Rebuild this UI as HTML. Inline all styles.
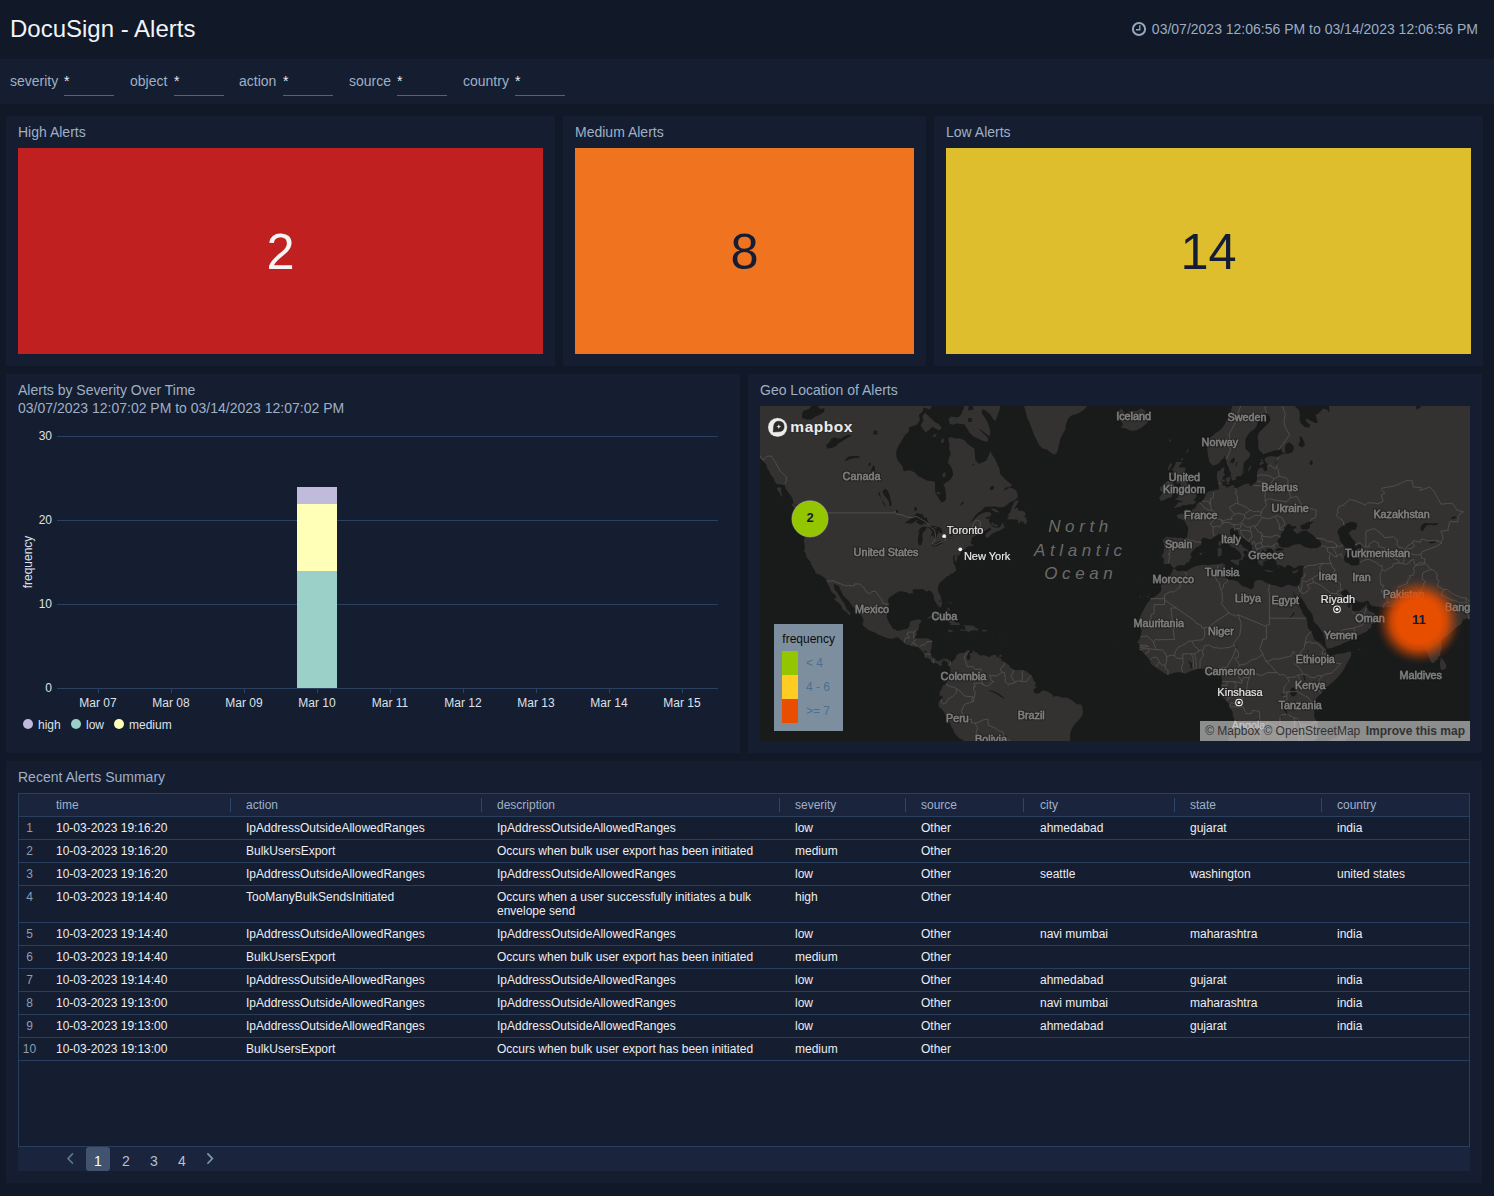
<!DOCTYPE html>
<html lang="en">
<head>
<meta charset="utf-8">
<title>DocuSign - Alerts</title>
<style>
*{box-sizing:border-box;margin:0;padding:0}
html,body{width:1494px;height:1196px;overflow:hidden}
body{background:#111827;font-family:"Liberation Sans",Arial,sans-serif;color:#c5d0de;position:relative}
.abs{position:absolute}
#hdr{left:0;top:0;width:1494px;height:59px;background:#111827}
#title{left:10px;top:14px;font-size:24px;line-height:30px;color:#f2f4f7;white-space:nowrap}
#range{right:16px;top:20px;font-size:14px;line-height:18px;color:#9aadc3;white-space:nowrap}
#fbar{left:0;top:59px;width:1494px;height:45px;background:#151d30}
.flt{position:absolute;top:72px;font-size:14px;line-height:18px;color:#9fb0c6;white-space:nowrap}
.flt i{position:absolute;top:23px;height:1px;width:50px;background:#3b6a94}
.flt b{position:absolute;top:0;font-weight:normal;color:#e8edf3}
.panel{position:absolute;background:#151d30}
.ptitle{position:absolute;left:12px;top:8px;font-size:14px;line-height:17px;color:#9fb0c6;white-space:nowrap}
.big{position:absolute;display:flex;align-items:center;justify-content:center;font-size:50.5px}
#tbl{position:absolute;left:12px;top:32px;width:1452px;height:354px;border:1px solid #2a3f5e;font-size:12px;line-height:14px;color:#eceef2}
.thead{position:absolute;left:0;top:0;width:1450px;height:22px;background:#1a243c;color:#9fb0c6}
.thead .c{top:4px}
.sep{position:absolute;top:4px;width:1px;height:14px;background:#2f4666}
.tr{position:absolute;left:0;width:1450px;border-top:1px solid #2a3f5e}
.c{position:absolute;top:4px;white-space:normal}
.ix{position:absolute;left:-1px;top:4px;width:23px;text-align:center;color:#8d9db3}
#pager{position:absolute;left:12px;top:386px;width:1452px;height:24px;background:#1a243c}
.pg{position:absolute;top:0;width:24px;height:24px;border-radius:3px;text-align:center;font-size:14px;line-height:28px;color:#b3c1d3}
.pg.on{background:#42536f;color:#fff}
</style>
</head>
<body>
<div id="hdr" class="abs"></div>
<div id="title" class="abs">DocuSign - Alerts</div>
<svg class="abs" style="left:1131px;top:21px" width="16" height="16" viewBox="0 0 16 16"><circle cx="8" cy="8" r="6.1" fill="none" stroke="#94a8bf" stroke-width="2"/><path d="M8.8 4.3 V8.7 H4.9" fill="none" stroke="#94a8bf" stroke-width="1.35"/></svg>
<div id="range" class="abs">03/07/2023 12:06:56 PM to 03/14/2023 12:06:56 PM</div>
<div id="fbar" class="abs"></div>
<div class="flt" style="left:10px">severity<b style="left:54px">*</b><i style="left:54px"></i></div>
<div class="flt" style="left:130px">object<b style="left:44px">*</b><i style="left:44px"></i></div>
<div class="flt" style="left:239px">action<b style="left:44px">*</b><i style="left:44px"></i></div>
<div class="flt" style="left:349px">source<b style="left:48px">*</b><i style="left:48px"></i></div>
<div class="flt" style="left:463px">country<b style="left:52px">*</b><i style="left:52px"></i></div>

<div class="panel" style="left:6px;top:116px;width:549px;height:250px">
  <div class="ptitle">High Alerts</div>
  <div class="big" style="left:12px;top:32px;width:525px;height:206px;background:#c02020;color:#f4f4f4">2</div>
</div>
<div class="panel" style="left:563px;top:116px;width:363px;height:250px">
  <div class="ptitle">Medium Alerts</div>
  <div class="big" style="left:12px;top:32px;width:339px;height:206px;background:#f07420;color:#141d33">8</div>
</div>
<div class="panel" style="left:934px;top:116px;width:549px;height:250px">
  <div class="ptitle">Low Alerts</div>
  <div class="big" style="left:12px;top:32px;width:525px;height:206px;background:#dfbe2e;color:#141d33">14</div>
</div>

<div class="panel" id="p-chart" style="left:6px;top:374px;width:734px;height:379px">
  <div class="ptitle">Alerts by Severity Over Time</div>
  <div class="ptitle" style="top:26px">03/07/2023 12:07:02 PM to 03/14/2023 12:07:02 PM</div>
  <svg class="abs" style="left:0;top:0" width="734" height="379" viewBox="6 374 734 379" font-family="Liberation Sans, Arial, sans-serif" font-size="12" fill="#dde2ea">
    <g stroke="#2c4160" stroke-width="1" shape-rendering="crispEdges">
      <line x1="57" x2="718" y1="436.5" y2="436.5"/>
      <line x1="57" x2="718" y1="520.5" y2="520.5"/>
      <line x1="57" x2="718" y1="604.5" y2="604.5"/>
      <line x1="57" x2="718" y1="688.5" y2="688.5"/>
      <line x1="98.5" x2="98.5" y1="688" y2="693"/>
      <line x1="171.5" x2="171.5" y1="688" y2="693"/>
      <line x1="244.5" x2="244.5" y1="688" y2="693"/>
      <line x1="317.5" x2="317.5" y1="688" y2="693"/>
      <line x1="390.5" x2="390.5" y1="688" y2="693"/>
      <line x1="463.5" x2="463.5" y1="688" y2="693"/>
      <line x1="536.5" x2="536.5" y1="688" y2="693"/>
      <line x1="609.5" x2="609.5" y1="688" y2="693"/>
      <line x1="682.5" x2="682.5" y1="688" y2="693"/>
    </g>
    <g text-anchor="end">
      <text x="52" y="440">30</text>
      <text x="52" y="524">20</text>
      <text x="52" y="608">10</text>
      <text x="52" y="692">0</text>
    </g>
    <g text-anchor="middle">
      <text x="98" y="707">Mar 07</text>
      <text x="171" y="707">Mar 08</text>
      <text x="244" y="707">Mar 09</text>
      <text x="317" y="707">Mar 10</text>
      <text x="390" y="707">Mar 11</text>
      <text x="463" y="707">Mar 12</text>
      <text x="536" y="707">Mar 13</text>
      <text x="609" y="707">Mar 14</text>
      <text x="682" y="707">Mar 15</text>
    </g>
    <text transform="translate(32,562) rotate(-90)" text-anchor="middle">frequency</text>
    <g shape-rendering="crispEdges">
      <rect x="297" y="487" width="40" height="17" fill="#c0bbdb"/>
      <rect x="297" y="504" width="40" height="67" fill="#ffffb8"/>
      <rect x="297" y="571" width="40" height="117" fill="#9ad0c7"/>
    </g>
    <circle cx="28" cy="724" r="5" fill="#c0bbdb"/>
    <text x="38" y="729">high</text>
    <circle cx="76" cy="724" r="5" fill="#9ad0c7"/>
    <text x="86" y="729">low</text>
    <circle cx="119" cy="724" r="5" fill="#ffffb8"/>
    <text x="129" y="729">medium</text>
  </svg>
</div>
<div class="panel" id="p-geo" style="left:748px;top:374px;width:734px;height:379px">
  <div class="ptitle">Geo Location of Alerts</div>
<svg class="abs" id="map" style="left:12px;top:32px" width="710" height="335" viewBox="760 406 710 335" font-family="Liberation Sans, Arial, sans-serif">
<rect x="760" y="406" width="710" height="335" fill="#191a1a"/>
<path fill="#343231" d="M749.2,378.7L749.2,454.0L756.6,454.7L760.1,458.3L763.2,461.4L766.0,464.3L767.2,467.9L769.1,471.3L771.0,475.3L773.2,477.5L774.7,481.4L776.6,484.1L780.9,484.6L784.7,485.2L785.9,488.9L788.1,492.0L790.3,495.1L792.2,497.7L793.1,500.7L793.7,503.2L791.5,504.2L793.1,507.1L796.5,509.5L799.0,511.9L801.5,513.8L805.2,516.0L807.4,515.7L807.7,512.9L809.0,513.4L809.9,516.7L810.2,519.9L808.7,521.3L808.0,518.1L806.5,516.9L803.1,515.7L803.4,518.5L804.6,522.2L805.2,525.4L805.4,529.0L804.9,533.4L804.6,537.7L803.7,540.7L804.6,544.5L804.9,548.2L804.0,550.7L805.9,553.9L806.2,556.8L808.4,559.5L809.9,561.1L811.2,562.3L810.2,563.5L811.5,564.5L811.9,565.8L813.3,568.5L814.9,570.4L815.7,573.5L819.3,574.2L821.4,575.7L823.0,576.7L825.5,578.4L826.6,581.0L827.4,583.2L829.2,586.5L830.2,589.0L831.1,591.2L833.6,593.7L835.8,595.8L836.4,597.6L834.5,598.5L833.1,598.1L835.5,600.4L837.6,602.1L839.8,603.9L841.7,606.0L842.3,609.0L844.2,610.4L846.0,611.8L847.9,613.5L849.0,615.2L850.4,614.3L850.4,612.8L848.2,610.8L846.7,609.4L846.0,607.3L844.8,604.6L843.2,602.1L841.7,600.0L840.1,597.6L838.6,594.7L837.0,592.2L834.8,589.7L833.9,586.8L833.9,583.9L836.7,585.0L839.2,586.1L840.1,589.4L841.7,592.6L843.2,595.5L845.7,597.9L847.6,599.7L849.5,601.8L851.0,604.2L852.6,606.6L855.1,609.0L857.6,611.4L859.8,613.8L861.9,616.2L863.2,618.9L863.5,621.6L863.2,622.9L862.2,623.6L863.5,625.9L866.0,627.9L868.8,630.2L871.6,631.5L874.4,632.1L876.9,634.1L880.0,635.2L883.1,636.4L886.2,637.7L889.3,638.5L891.5,639.1L894.0,638.2L896.2,637.3L898.7,638.0L901.2,640.3L903.7,642.5L906.2,644.4L908.7,644.9L911.1,645.6L913.6,646.5L916.1,647.2L918.0,646.8L918.9,648.0L920.5,649.6L922.1,651.2L923.9,653.1L924.4,654.3L924.1,656.2L924.9,657.7L926.4,658.5L927.0,657.2L928.0,658.1L929.8,659.2L931.1,660.7L930.8,662.1L932.3,662.2L933.3,663.3L935.1,662.9L937.0,663.5L938.6,664.6L939.5,665.9L941.1,665.7L942.3,664.8L941.4,662.9L942.6,661.3L943.9,660.3L945.4,660.7L947.0,661.9L947.9,662.9L947.3,664.1L948.5,665.4L949.2,666.0L950.4,667.9L950.1,671.0L950.7,674.2L951.3,676.3L949.8,679.5L947.0,681.0L946.0,682.9L945.1,684.8L942.9,685.5L942.0,687.9L940.7,690.4L939.5,691.6L939.8,694.4L939.3,695.5L941.7,696.6L942.6,696.0L942.6,698.5L941.1,699.4L938.9,701.6L938.3,703.3L938.7,705.7L938.9,707.2L941.7,709.1L943.2,711.0L944.8,713.5L946.3,716.3L947.6,718.9L949.2,721.7L950.7,724.9L951.6,727.1L953.5,730.0L954.1,732.2L956.0,735.1L958.5,737.7L962.5,740.0L966.3,742.3L969.4,744.2L972.5,746.8L972.8,758.8L1070.0,758.8L1069.1,745.5L1069.7,742.3L1070.3,738.4L1070.0,734.2L1071.6,729.4L1073.1,726.8L1075.3,723.6L1078.1,720.8L1080.6,717.9L1082.5,715.1L1082.9,711.9L1082.6,709.1L1081.9,706.0L1080.9,704.6L1077.8,704.3L1075.3,703.2L1072.8,701.0L1070.6,699.4L1067.5,697.7L1064.4,697.4L1061.3,697.5L1058.2,696.3L1055.7,696.0L1053.2,696.9L1052.6,694.7L1050.1,693.2L1047.3,691.6L1043.8,690.5L1041.4,691.0L1040.1,692.9L1038.2,693.5L1034.5,693.2L1033.6,690.4L1034.5,688.5L1037.0,687.6L1034.8,685.7L1035.9,683.2L1034.2,681.3L1032.9,678.2L1032.0,676.0L1030.8,674.8L1028.6,673.2L1026.4,671.3L1023.3,670.2L1020.2,669.8L1017.1,670.2L1013.6,669.8L1012.1,668.5L1009.9,667.0L1009.0,665.1L1005.8,662.9L1003.7,661.6L1001.5,661.3L1001.5,659.1L999.0,657.5L996.5,656.6L995.6,655.3L998.7,654.8L995.3,654.8L991.5,655.3L990.6,656.4L988.4,656.9L985.9,655.8L984.0,655.1L981.2,655.4L979.1,655.3L978.4,653.4L976.3,652.4L974.4,652.3L974.1,650.2L972.5,650.8L972.8,652.6L970.6,653.2L969.1,654.2L970.3,656.2L970.0,658.8L968.5,660.2L967.2,659.1L966.9,656.6L968.2,654.7L967.4,652.7L969.4,651.3L969.1,649.9L967.5,649.9L965.7,651.5L963.5,652.9L960.4,653.1L958.3,653.7L956.3,655.6L955.9,658.1L953.8,660.3L952.0,661.9L952.3,663.7L951.0,662.2L950.4,661.3L948.8,659.7L946.7,658.8L944.2,658.5L942.5,659.2L940.1,660.5L937.9,661.0L936.1,660.3L935.1,659.2L933.6,658.3L932.3,656.9L931.1,655.0L930.6,653.1L930.8,650.8L931.4,648.3L931.7,645.4L932.0,642.8L932.5,641.2L930.5,639.8L928.3,638.5L925.8,638.2L923.3,638.3L920.5,638.6L918.0,638.3L916.1,639.0L914.6,638.3L915.8,636.7L916.8,634.7L916.6,632.5L917.2,630.2L918.2,630.5L918.9,627.2L919.2,624.2L920.8,622.2L921.3,620.6L919.9,619.6L916.8,619.6L913.6,620.2L911.1,620.9L909.7,622.6L909.6,625.2L908.7,627.2L906.8,628.9L904.3,629.3L901.8,630.0L899.3,630.5L897.1,631.0L895.6,629.5L893.4,628.9L891.8,627.2L890.9,625.2L889.3,623.2L888.3,620.9L886.9,617.5L886.9,614.2L887.0,610.8L887.9,607.3L888.9,604.7L888.1,601.1L888.7,598.3L890.9,596.2L893.7,594.7L895.9,593.0L898.7,591.5L901.8,591.3L904.3,592.1L906.2,591.9L907.4,593.1L909.9,593.7L911.8,593.0L913.3,594.0L912.7,591.5L912.7,589.7L914.9,589.0L917.4,589.4L919.9,589.2L922.7,589.0L924.9,590.4L926.7,591.7L928.9,590.3L930.8,591.2L933.0,593.7L933.9,596.2L933.7,598.3L934.8,601.1L936.1,602.8L936.7,604.6L938.3,605.6L938.9,607.5L940.7,607.3L941.7,605.6L942.1,602.5L941.2,599.0L940.6,596.2L939.5,594.0L938.3,591.2L937.8,588.3L938.6,585.0L939.8,582.8L942.3,580.8L944.8,578.4L946.7,576.3L948.7,576.1L950.7,573.9L953.2,573.3L954.8,571.6L956.3,571.0L955.7,568.1L954.8,564.7L953.5,563.5L953.8,560.3L953.2,556.4L954.4,554.8L954.4,559.2L955.1,562.7L956.6,560.3L957.6,558.0L956.3,554.8L958.0,556.6L959.7,554.5L961.0,551.5L960.8,549.7L961.9,549.9L964.7,549.3L967.5,548.0L964.4,547.2L967.5,547.0L969.1,546.2L971.3,545.9L973.5,545.5L973.6,544.1L972.5,545.1L971.3,543.6L970.3,542.6L971.6,541.3L971.3,539.0L972.8,537.1L975.0,536.0L977.2,534.2L979.7,533.8L982.2,532.5L983.0,531.6L985.3,530.5L988.4,528.7L990.3,527.6L990.9,529.4L989.0,530.5L986.5,532.9L985.3,535.1L985.9,537.3L988.4,537.5L990.9,534.7L993.4,532.9L996.8,531.6L999.9,530.5L1001.5,529.6L1004.0,528.1L1005.2,526.3L1003.4,525.4L1003.4,522.2L1001.8,524.0L999.9,527.2L997.4,527.8L994.3,527.4L992.1,526.3L990.3,524.0L989.0,520.8L989.6,518.5L987.2,519.0L985.0,517.4L987.5,517.1L990.6,516.2L991.5,513.6L989.0,511.9L985.3,512.2L981.9,513.6L978.4,515.5L975.3,518.3L972.5,521.3L970.0,523.1L971.9,520.6L973.8,517.8L975.0,515.7L977.8,512.9L980.3,511.5L982.8,509.3L984.7,507.1L988.4,506.6L992.1,506.6L995.9,506.6L999.6,507.4L1003.7,506.9L1007.1,504.7L1010.2,502.0L1013.6,501.0L1016.4,498.7L1018.0,496.7L1017.4,493.1L1015.8,489.9L1013.0,488.4L1009.3,487.3L1012.4,484.9L1009.0,482.5L1005.5,479.7L1003.0,477.0L999.9,473.6L999.6,469.0L997.4,464.3L995.3,459.6L992.1,454.7L990.6,450.9L988.4,455.9L986.5,460.2L982.8,462.6L978.7,463.8L975.3,460.2L975.0,454.7L974.4,448.4L971.0,446.5L967.8,443.9L964.7,440.6L960.4,438.6L955.4,438.6L950.7,436.9L948.2,438.6L949.5,443.9L949.2,448.4L950.7,453.4L948.5,459.6L947.0,462.0L950.1,465.5L952.3,469.6L953.2,474.7L950.7,479.2L947.0,481.9L943.2,484.4L945.1,487.8L945.7,493.1L946.3,498.2L944.8,501.2L941.4,502.2L939.2,499.2L937.6,496.2L935.4,493.1L935.1,487.8L935.1,481.7L931.4,481.1L926.7,480.6L922.1,478.1L918.0,475.9L914.6,472.2L909.6,470.2L903.7,471.3L902.4,466.1L898.1,461.1L896.2,455.9L896.5,450.3L898.7,445.2L901.8,440.6L904.9,435.2L908.7,431.7L909.0,427.5L912.7,426.1L916.8,424.7L919.9,420.3L918.9,415.1L922.7,411.3L923.6,407.4L926.7,408.2L929.8,409.8L931.4,406.6L936.1,402.7L937.6,378.7ZM1234.5,378.7L1233.9,401.9L1232.0,405.9L1231.1,411.3L1229.5,415.9L1226.7,420.3L1224.8,424.0L1222.0,428.3L1218.9,431.1L1215.8,433.1L1211.7,436.5L1208.0,439.2L1207.1,443.2L1207.1,447.1L1207.4,450.9L1208.0,455.9L1208.9,459.6L1209.3,462.0L1212.1,464.9L1213.6,465.5L1216.7,464.6L1219.2,462.9L1221.4,459.9L1223.6,458.3L1224.5,455.3L1225.1,458.0L1226.4,459.6L1226.7,463.8L1228.6,467.3L1229.8,471.3L1231.4,473.6L1230.4,475.3L1231.4,477.2L1232.0,479.5L1231.7,480.3L1233.6,480.4L1236.0,479.5L1235.7,477.5L1237.9,476.1L1240.7,476.4L1242.3,473.6L1243.2,469.0L1243.5,466.1L1243.8,462.6L1245.7,460.8L1248.5,458.3L1250.4,454.7L1249.1,452.2L1245.7,449.0L1245.1,443.2L1245.7,438.6L1247.6,435.2L1250.4,431.7L1254.4,429.0L1257.2,424.7L1257.8,421.1L1258.8,417.4L1261.0,415.1L1263.8,413.6L1266.9,413.6L1269.4,415.9L1270.6,419.6L1268.4,423.2L1265.0,426.5L1261.9,429.7L1258.8,432.8L1257.5,437.2L1258.5,443.2L1258.2,447.1L1259.1,450.3L1261.6,452.2L1263.5,454.4L1266.3,453.1L1269.4,452.2L1272.5,451.2L1275.6,450.3L1278.4,450.0L1280.9,449.0L1282.5,452.2L1285.3,453.7L1282.8,454.0L1280.0,455.3L1278.7,456.5L1275.6,456.8L1272.5,455.9L1268.8,456.5L1265.0,458.0L1264.7,460.5L1266.3,463.2L1267.8,463.5L1267.2,466.7L1267.2,470.2L1265.0,471.6L1263.5,469.3L1261.9,467.0L1258.8,468.7L1256.9,472.5L1256.9,476.4L1257.2,478.6L1255.7,482.5L1253.5,483.8L1251.9,485.7L1249.8,485.7L1248.8,483.6L1245.7,483.8L1242.6,485.2L1239.5,486.8L1236.0,488.4L1234.2,486.8L1233.6,484.9L1230.4,485.7L1228.9,487.0L1225.8,487.8L1226.1,485.7L1223.3,485.7L1222.3,483.6L1221.4,480.8L1222.3,479.2L1223.3,476.4L1225.5,474.7L1223.6,473.0L1224.2,470.2L1224.5,467.0L1222.3,467.9L1220.2,470.5L1218.0,470.8L1217.0,473.6L1216.7,477.0L1217.4,479.7L1218.3,482.5L1218.6,485.7L1219.2,488.4L1218.0,489.9L1216.4,489.4L1213.6,490.5L1211.1,490.7L1208.6,491.5L1206.5,493.3L1205.2,496.7L1204.0,498.4L1202.4,500.7L1200.5,502.0L1198.4,502.9L1196.8,503.7L1196.3,506.6L1194.9,508.3L1192.1,509.8L1191.5,511.2L1188.4,511.0L1187.5,509.5L1185.4,509.5L1186.5,511.9L1186.8,514.5L1184.3,514.5L1181.8,513.6L1179.0,514.3L1176.5,515.5L1177.2,517.6L1178.7,518.5L1180.9,519.0L1183.1,519.9L1184.6,521.1L1185.3,523.1L1186.8,525.2L1187.9,527.2L1188.1,529.0L1187.6,532.9L1187.1,536.0L1186.5,537.9L1184.3,538.6L1181.5,538.1L1178.4,537.9L1175.0,537.5L1171.6,537.4L1168.8,537.1L1166.9,536.4L1164.7,538.3L1162.7,539.4L1162.8,541.1L1163.9,543.2L1164.2,546.2L1164.4,548.2L1163.9,551.1L1163.2,553.9L1162.1,555.2L1161.9,557.2L1163.2,557.8L1163.9,558.8L1163.9,560.7L1163.6,564.1L1166.0,564.1L1168.4,563.7L1170.0,563.7L1171.7,565.8L1172.8,567.4L1174.1,568.1L1175.0,567.4L1177.2,565.8L1179.7,565.2L1182.5,565.2L1184.8,565.2L1186.2,563.1L1189.0,561.9L1189.9,559.2L1192.1,557.4L1190.9,555.6L1190.6,553.9L1191.8,551.9L1194.0,549.5L1195.9,547.8L1198.4,546.6L1201.2,544.7L1201.6,542.8L1201.0,540.7L1201.8,538.8L1204.0,537.7L1206.5,538.3L1208.6,539.0L1210.8,539.6L1212.7,538.3L1214.6,536.6L1217.0,535.5L1218.9,533.8L1221.1,534.9L1223.0,536.0L1223.9,538.1L1224.4,540.3L1226.4,542.4L1228.6,544.1L1230.1,545.7L1232.0,547.2L1234.2,547.4L1235.7,549.0L1236.7,549.9L1238.2,550.7L1239.5,552.3L1240.7,553.9L1241.7,556.4L1240.9,557.8L1240.2,559.9L1241.7,560.5L1243.1,558.6L1243.4,557.0L1245.1,556.0L1244.6,554.3L1243.2,553.3L1244.1,550.7L1245.4,550.5L1247.3,551.3L1247.9,552.5L1248.8,553.1L1249.1,551.5L1247.6,549.7L1245.1,548.2L1242.3,546.6L1242.0,544.5L1239.2,544.5L1237.3,543.2L1235.4,541.5L1233.9,537.7L1231.7,535.8L1229.8,533.8L1230.4,531.4L1229.5,529.8L1231.7,528.5L1234.2,528.1L1233.6,529.2L1234.8,531.8L1236.0,529.8L1237.9,531.2L1238.8,534.7L1241.0,536.8L1243.2,537.9L1245.4,539.8L1247.9,541.3L1249.8,542.6L1251.3,544.1L1252.2,546.6L1251.9,550.3L1253.5,552.7L1254.7,554.8L1256.3,556.6L1257.5,559.0L1259.1,559.5L1261.3,559.2L1263.0,560.5L1260.7,559.7L1258.2,559.7L1257.5,561.1L1258.6,563.1L1259.1,565.0L1260.3,564.3L1261.4,566.4L1262.4,565.0L1263.6,566.4L1263.1,564.3L1262.5,562.3L1264.4,562.7L1263.5,560.7L1265.0,560.7L1266.3,561.7L1266.4,559.5L1264.7,558.4L1262.5,557.2L1262.8,555.2L1264.1,556.0L1263.5,553.9L1261.9,552.3L1262.1,550.3L1263.0,549.9L1264.1,551.3L1265.3,552.5L1265.6,551.1L1266.3,552.5L1266.3,550.9L1267.5,551.7L1265.9,549.9L1267.8,548.6L1270.0,548.4L1272.5,549.0L1273.1,551.1L1273.1,552.1L1272.8,554.3L1275.3,554.3L1274.7,556.4L1273.7,557.8L1273.4,559.2L1275.6,558.8L1275.0,560.3L1276.4,561.1L1276.2,562.9L1277.2,564.3L1276.9,565.4L1279.3,565.0L1281.8,565.6L1283.7,567.4L1285.9,567.0L1287.1,564.9L1289.3,565.2L1291.5,566.4L1293.7,567.9L1296.5,567.4L1298.3,565.8L1300.5,565.4L1302.7,565.8L1304.3,565.4L1303.3,567.8L1303.0,570.4L1303.3,573.5L1302.1,576.1L1301.0,579.1L1300.4,580.6L1299.7,583.2L1298.7,585.2L1296.8,586.5L1294.6,586.5L1292.1,585.9L1290.6,585.0L1288.1,584.8L1285.9,585.4L1284.3,586.5L1281.8,587.4L1279.0,586.7L1276.2,585.6L1272.5,585.0L1270.0,584.6L1268.1,583.4L1265.6,582.6L1263.1,581.0L1260.7,580.0L1257.8,580.0L1255.4,581.0L1254.0,582.8L1254.1,586.1L1253.2,588.3L1251.0,589.4L1248.2,588.3L1245.4,586.7L1242.3,585.9L1239.8,584.1L1238.7,581.9L1236.0,581.0L1232.9,579.9L1229.8,580.0L1227.0,578.9L1225.5,577.2L1223.0,576.1L1224.2,573.9L1225.8,572.0L1225.5,569.7L1224.4,567.0L1225.9,564.5L1223.9,565.0L1223.0,563.5L1221.4,563.1L1218.9,564.5L1215.8,564.5L1213.0,564.5L1210.2,564.9L1207.4,565.2L1204.3,564.7L1200.8,565.0L1197.7,565.8L1194.6,566.4L1191.8,568.1L1189.3,569.3L1187.1,570.8L1185.0,571.6L1182.3,570.8L1179.4,571.2L1176.9,570.8L1175.0,568.7L1173.1,568.9L1172.3,571.6L1170.9,574.2L1169.1,576.5L1166.9,577.6L1164.7,578.7L1162.8,581.3L1161.3,584.3L1161.0,586.8L1161.6,589.0L1160.7,591.2L1159.1,593.3L1156.6,595.5L1153.5,597.4L1151.0,598.1L1149.4,601.1L1147.0,603.5L1145.4,606.3L1143.8,609.4L1142.0,612.5L1140.7,615.5L1138.9,618.5L1138.4,622.1L1140.1,622.9L1140.9,625.5L1140.4,628.2L1141.7,631.1L1140.7,634.7L1140.1,638.0L1138.9,640.6L1137.0,642.2L1138.9,643.8L1139.8,646.0L1139.2,648.9L1140.4,650.5L1142.9,652.1L1144.8,654.3L1146.6,656.6L1148.8,658.8L1150.4,660.7L1150.4,662.6L1151.9,665.1L1154.7,666.6L1156.6,668.0L1158.8,669.5L1161.6,671.3L1164.4,673.2L1167.5,674.9L1170.6,673.8L1173.7,672.9L1177.2,672.3L1180.3,672.3L1182.8,672.7L1185.0,673.7L1187.8,672.4L1190.6,671.3L1193.1,670.6L1195.2,669.5L1198.4,668.8L1201.5,668.5L1204.6,668.7L1206.8,669.9L1208.3,672.3L1209.9,674.8L1212.7,674.9L1215.2,674.5L1217.7,674.2L1219.2,674.3L1221.1,675.9L1221.7,677.9L1222.3,680.1L1221.9,682.6L1221.1,685.1L1220.8,687.3L1219.5,689.4L1218.8,690.7L1220.2,693.2L1221.4,695.7L1223.3,697.9L1225.8,700.3L1227.9,702.5L1229.3,705.0L1229.8,707.4L1231.4,710.0L1232.9,713.2L1232.6,716.0L1233.9,718.2L1234.5,721.7L1234.5,724.6L1233.6,727.8L1231.1,730.3L1229.8,733.5L1229.2,736.4L1228.3,740.0L1228.1,743.2L1228.3,758.8L1302.1,758.8L1306.4,745.2L1310.2,742.9L1313.6,741.3L1315.8,739.7L1318.0,736.7L1318.4,733.8L1317.7,730.0L1317.8,726.2L1317.7,722.3L1316.1,720.4L1314.5,717.6L1314.2,714.4L1314.2,711.3L1313.3,708.8L1312.4,706.9L1313.3,704.1L1314.5,701.9L1316.1,698.8L1317.7,696.6L1320.1,694.4L1322.3,691.6L1324.5,689.1L1327.6,686.3L1330.7,683.8L1333.5,681.6L1336.7,678.5L1339.8,675.1L1342.3,672.0L1344.4,668.5L1346.3,664.8L1348.2,661.3L1350.1,657.8L1351.3,655.3L1351.0,651.5L1348.5,651.8L1345.1,652.9L1341.6,653.5L1337.9,653.7L1334.8,654.8L1331.7,655.8L1328.9,655.4L1326.7,653.1L1325.8,652.1L1326.4,650.5L1326.1,648.9L1324.2,647.3L1322.3,645.1L1319.8,642.7L1317.3,641.2L1315.2,640.4L1313.9,638.3L1313.0,635.4L1311.7,632.5L1309.9,629.8L1308.0,628.2L1307.4,625.2L1307.4,621.9L1306.4,618.5L1304.9,616.2L1302.4,613.5L1302.1,611.1L1300.2,608.0L1298.7,604.9L1297.1,601.4L1295.9,598.3L1294.3,595.8L1293.2,593.0L1292.9,590.6L1294.3,594.0L1296.2,596.9L1298.2,598.5L1299.0,596.2L1299.9,593.7L1300.5,592.2L1300.1,594.7L1299.3,597.2L1301.1,597.6L1302.7,600.0L1304.9,603.5L1306.8,607.0L1308.6,609.7L1310.5,611.8L1312.4,614.8L1313.3,618.2L1313.5,620.9L1315.5,623.6L1317.7,624.9L1319.5,627.9L1321.4,630.8L1323.3,633.8L1324.5,636.4L1324.8,639.3L1325.4,642.2L1326.2,646.4L1327.0,648.6L1329.5,648.6L1331.7,648.3L1334.8,646.7L1337.9,645.7L1341.0,644.4L1344.4,642.7L1347.9,641.2L1351.3,640.3L1354.1,639.1L1354.7,637.0L1357.5,635.6L1360.3,634.7L1363.4,633.1L1366.6,631.8L1368.4,629.5L1371.2,627.5L1371.5,624.2L1373.7,623.2L1375.0,620.2L1377.8,616.7L1376.2,615.9L1374.0,612.8L1371.5,612.0L1368.7,610.8L1367.2,608.2L1367.0,606.0L1367.2,603.4L1366.3,604.2L1365.8,605.6L1363.8,607.2L1361.6,609.4L1359.1,611.1L1356.3,610.9L1353.2,611.4L1351.6,609.7L1352.2,608.0L1352.2,605.6L1351.1,604.0L1349.9,606.0L1349.7,608.7L1348.2,607.3L1347.6,604.9L1347.6,602.5L1345.7,600.4L1343.5,598.3L1342.6,595.8L1341.3,593.3L1340.4,592.4L1341.6,591.9L1343.2,590.6L1344.8,589.4L1346.9,589.9L1348.8,592.2L1350.1,594.6L1351.6,597.7L1354.7,599.2L1357.5,601.6L1360.6,602.5L1363.8,602.3L1366.6,600.7L1368.7,601.3L1369.7,604.2L1371.9,605.8L1375.3,606.6L1379.3,606.8L1383.1,607.5L1386.5,607.3L1389.9,607.0L1393.4,607.2L1396.8,606.5L1399.0,606.8L1400.2,608.7L1401.8,611.6L1404.3,613.0L1406.1,615.0L1408.6,615.7L1410.8,614.8L1409.5,616.5L1406.7,617.0L1408.3,619.6L1410.8,621.9L1413.0,622.6L1415.8,621.2L1416.4,618.9L1417.3,617.2L1417.8,619.6L1418.3,622.2L1418.1,625.2L1418.4,628.2L1418.9,631.1L1419.8,634.7L1420.8,638.0L1422.0,641.2L1423.3,644.4L1424.5,648.0L1426.1,650.8L1427.6,653.4L1428.9,657.2L1430.1,660.7L1431.4,662.4L1433.1,663.2L1434.8,662.1L1435.1,660.7L1437.6,659.6L1438.5,656.2L1440.2,655.9L1440.2,652.4L1441.6,648.6L1441.6,646.0L1441.0,643.2L1441.0,640.3L1443.2,638.6L1444.7,636.9L1447.9,636.0L1448.2,634.4L1451.0,632.5L1453.5,630.3L1456.0,627.5L1458.8,625.5L1461.3,624.1L1462.5,621.6L1462.8,619.7L1465.3,619.1L1466.6,618.2L1468.1,619.6L1470.3,618.9L1472.8,618.2L1474.3,616.5L1476.5,616.5L1481.2,618.2L1481.2,378.7ZM967.2,378.7L963.5,401.1L964.1,407.4L961.6,413.6L959.7,416.6L956.3,417.4L951.0,416.6L948.5,419.6L949.8,424.0L953.2,424.7L956.6,423.2L960.1,424.0L964.1,424.3L967.2,428.6L969.7,433.1L973.1,435.9L976.6,437.9L980.3,439.6L984.0,441.2L987.2,441.9L988.4,438.6L984.7,434.5L980.9,431.1L978.1,428.6L981.9,430.4L985.9,433.8L989.3,436.5L990.6,432.4L989.3,427.5L987.8,422.5L985.0,418.1L981.5,412.8L982.8,409.0L986.8,411.3L990.3,414.4L993.1,418.9L995.3,421.1L997.7,415.1L999.6,409.8L1000.2,406.6L997.7,402.7L993.7,378.7ZM920.5,425.4L923.0,429.0L925.5,432.4L928.6,430.4L932.3,426.8L936.1,429.0L939.5,430.4L941.7,427.5L938.6,424.0L934.5,421.8L930.5,418.1L928.0,415.5L925.2,412.8L922.4,415.9L923.3,421.1ZM933.0,437.2L936.1,436.2L936.4,434.2L933.3,434.5ZM941.4,443.2L944.2,441.9L943.2,437.9L941.1,439.9ZM936.4,493.6L940.4,494.4L939.8,492.3L937.0,492.0ZM942.3,477.0L945.4,477.0L945.4,471.9L942.9,473.6ZM1020.2,378.7L1024.5,402.7L1024.2,406.6L1025.8,412.1L1027.0,417.4L1029.2,421.8L1030.8,426.1L1032.6,431.1L1034.5,435.9L1037.0,440.6L1039.2,445.2L1042.6,448.4L1047.3,449.7L1050.7,452.8L1054.4,454.7L1056.9,452.8L1058.2,448.4L1059.4,443.2L1060.7,437.9L1062.9,433.8L1065.3,429.7L1066.0,424.0L1068.5,418.1L1072.2,415.1L1075.6,414.4L1079.4,412.8L1084.0,409.8L1088.7,404.3L1094.9,378.7ZM1115.5,415.5L1118.0,411.3L1121.4,408.6L1124.8,412.8L1126.1,416.3L1128.3,414.4L1128.6,411.3L1132.3,410.9L1135.1,410.9L1138.5,410.5L1141.0,408.2L1144.8,410.5L1146.0,414.4L1149.1,418.9L1147.6,422.5L1144.8,425.1L1141.0,427.9L1137.0,430.0L1132.9,431.1L1128.6,430.0L1125.2,427.9L1120.9,427.9L1123.0,424.3L1121.1,421.1L1116.7,420.3L1121.7,418.9L1121.1,416.3ZM1169.1,439.9L1170.6,438.9L1170.9,440.9L1169.7,441.9ZM1173.7,507.9L1175.5,508.2L1178.4,506.4L1180.4,506.9L1182.2,504.7L1184.0,505.4L1187.5,504.7L1189.9,504.2L1192.4,504.4L1194.6,503.4L1195.9,502.5L1195.9,501.2L1193.4,501.0L1194.6,499.2L1196.8,495.6L1195.5,493.3L1192.7,493.3L1192.1,491.0L1191.8,489.7L1191.0,487.3L1189.3,484.9L1187.5,484.1L1186.8,481.4L1185.3,478.1L1182.5,477.0L1183.4,475.3L1184.0,473.0L1185.1,470.2L1185.9,468.2L1183.4,467.3L1179.7,467.6L1178.7,466.1L1181.2,463.8L1182.2,461.7L1179.0,462.0L1175.9,462.0L1175.0,464.9L1173.4,467.9L1171.6,469.0L1173.4,471.3L1172.2,473.0L1172.2,475.3L1174.4,476.4L1173.7,480.3L1175.6,479.7L1176.5,477.2L1176.9,480.3L1175.6,483.0L1177.8,483.8L1180.6,482.7L1180.6,485.2L1182.5,487.0L1182.0,490.5L1180.9,491.3L1177.5,491.0L1178.1,493.1L1176.9,494.1L1178.7,495.1L1178.1,497.2L1175.3,498.7L1175.6,500.0L1178.1,499.7L1179.4,500.5L1181.5,501.2L1183.1,500.2L1181.8,502.2L1178.4,502.2L1177.5,503.7L1175.9,505.7ZM1168.4,480.6L1172.5,481.4L1174.1,484.1L1174.4,486.2L1172.2,487.8L1172.5,491.0L1172.8,493.6L1171.6,497.2L1168.4,497.9L1165.6,499.2L1162.8,500.7L1160.7,500.7L1159.7,498.9L1159.1,497.7L1161.0,495.6L1162.2,493.1L1163.5,492.0L1160.0,490.7L1160.3,487.8L1160.3,486.5L1163.8,486.5L1165.6,484.9L1164.4,483.3L1166.0,481.7ZM1167.8,468.4L1170.0,463.8L1172.2,463.2L1170.9,466.7L1168.8,470.8ZM1186.5,454.0L1188.4,450.9L1188.7,448.4L1186.8,450.3ZM1181.2,460.2L1183.4,459.6L1182.8,457.7L1181.2,459.0ZM1006.8,519.4L1009.3,515.7L1007.1,515.0L1009.9,512.9L1010.8,510.5L1012.1,506.6L1013.6,503.2L1015.5,500.7L1018.6,500.2L1018.0,502.7L1014.9,507.6L1014.3,509.5L1016.7,507.6L1018.3,508.8L1018.3,511.0L1021.1,510.5L1024.5,511.5L1025.8,514.3L1023.9,517.6L1026.4,517.1L1025.8,519.4L1027.3,519.7L1026.4,523.8L1024.5,523.8L1023.6,521.3L1022.7,522.9L1021.1,520.4L1019.6,522.7L1017.4,522.7L1018.3,519.9L1015.5,519.4L1012.1,519.4L1009.0,519.2ZM990.6,508.6L994.6,508.8L999.0,511.5L999.0,512.4L995.3,511.9L992.1,510.0ZM990.9,523.8L992.1,522.0L994.6,524.5L998.4,524.7L996.8,526.7L993.7,526.1ZM926.9,618.7L928.9,616.9L932.0,615.0L935.1,614.2L937.9,614.3L940.7,614.7L943.2,615.7L946.0,616.9L949.2,618.4L951.3,619.6L954.1,620.9L956.0,622.4L958.5,622.7L960.5,624.1L959.7,624.7L957.3,625.2L954.1,625.0L951.0,625.2L949.5,625.4L951.0,623.6L949.2,622.6L947.3,621.2L946.0,619.6L943.5,619.2L941.1,618.2L938.6,617.9L936.4,617.0L935.4,615.9L933.0,617.2L931.1,617.5L929.2,618.5ZM932.6,619.1L934.2,618.5L934.5,619.9L933.0,620.1ZM959.6,630.2L960.7,629.3L963.5,629.8L966.0,629.7L964.9,627.9L964.9,626.5L962.9,625.4L965.4,625.2L968.2,625.4L971.0,625.4L973.5,626.0L975.9,627.2L974.7,628.0L977.5,628.4L978.6,629.7L977.5,630.8L975.3,630.2L973.5,630.2L971.6,630.8L970.0,631.0L969.1,632.6L967.8,631.5L965.4,630.8L962.2,630.8ZM947.4,630.7L948.8,629.8L951.6,630.2L953.5,631.0L954.1,631.8L952.3,631.6L950.7,632.3L948.8,631.8ZM982.0,630.3L982.5,629.8L985.9,629.9L987.2,630.5L986.2,631.5L984.0,631.6L982.2,631.6ZM998.7,657.0L999.3,655.0L1001.8,654.5L1001.5,656.7ZM947.6,607.7L949.2,607.7L949.8,610.4L948.8,611.4L947.6,609.7ZM945.4,602.5L948.8,602.1L948.8,602.8L946.0,602.8ZM949.8,601.4L951.6,602.8L951.3,604.6L950.4,603.5ZM999.0,637.0L1000.9,636.7L999.9,638.0ZM1000.9,641.9L1002.0,642.2L1001.8,643.0ZM1230.3,561.1L1231.1,559.9L1233.1,559.5L1235.1,560.1L1238.8,559.3L1240.1,559.3L1238.7,562.3L1239.2,564.1L1238.5,565.6L1236.0,564.3L1233.6,563.1L1232.0,562.3ZM1217.0,548.6L1218.0,548.8L1220.2,547.2L1221.4,548.4L1222.0,550.3L1221.7,552.5L1221.4,555.2L1221.1,556.0L1219.8,555.6L1218.4,556.8L1217.7,556.2L1217.8,552.9L1217.5,550.3ZM1220.8,539.8L1221.1,541.5L1221.2,543.6L1220.5,545.7L1220.0,546.6L1218.9,545.7L1218.4,544.3L1218.3,542.4L1218.9,541.5L1220.5,541.1ZM1264.7,570.8L1265.0,569.7L1266.6,569.9L1268.1,570.4L1270.0,570.6L1271.6,571.2L1273.4,571.2L1273.3,572.0L1271.2,572.0L1268.8,572.2L1266.3,571.2ZM1292.1,571.8L1294.0,571.2L1295.5,570.6L1297.4,570.1L1299.3,569.3L1297.3,571.6L1297.6,572.1L1296.2,572.5L1294.3,573.5L1292.4,572.9ZM1198.8,554.1L1201.2,552.5L1202.2,553.5L1201.0,555.2L1199.8,554.5ZM1203.3,552.1L1204.9,552.5L1204.7,553.1L1203.5,552.7ZM1195.2,556.8L1196.5,556.0L1196.3,557.0ZM1263.1,556.4L1264.4,556.4L1266.9,558.0L1268.0,559.9L1267.2,560.5L1265.9,558.8L1264.4,558.0ZM1277.9,567.4L1279.5,566.4L1279.0,567.9L1277.9,568.5ZM1272.2,555.4L1273.7,554.8L1274.4,556.2L1272.8,556.4ZM1248.0,470.2L1250.1,465.8L1251.3,466.1L1250.2,469.0L1248.5,471.6ZM1242.6,475.6L1244.8,469.3L1244.3,469.6L1242.7,473.6ZM1259.4,463.8L1260.7,462.0L1263.8,461.7L1264.1,462.9L1261.9,464.3L1260.3,465.8ZM1260.3,460.5L1261.9,459.0L1263.3,460.2L1261.9,461.4ZM1225.5,478.6L1227.9,477.2L1229.8,476.4L1230.7,478.6L1229.5,481.4L1227.9,482.7L1226.4,481.4ZM1222.0,479.7L1224.5,479.2L1225.1,481.4L1223.3,482.2L1222.3,481.4ZM1225.8,483.3L1228.6,482.7L1229.8,483.6L1227.6,484.6ZM1237.3,481.1L1238.7,481.4L1238.2,482.5ZM1440.2,658.0L1441.6,657.8L1443.5,660.3L1444.6,661.8L1446.0,664.4L1446.5,666.6L1445.7,668.5L1444.1,669.5L1442.6,670.0L1441.0,669.5L1440.2,667.0L1440.1,664.8L1439.9,662.6L1440.5,660.5L1440.9,659.1ZM1357.5,649.1L1361.3,649.1L1359.7,649.9ZM1345.1,726.2L1346.9,729.4L1348.8,737.1L1347.2,738.7L1346.3,737.4L1346.0,741.6L1345.4,745.5L1343.5,758.8L1329.5,758.8L1328.6,745.5L1329.8,739.7L1333.5,738.7L1336.3,737.4L1338.5,735.1L1340.7,733.2L1341.0,731.0L1343.5,730.3L1343.5,727.4ZM1313.6,706.4L1314.1,706.6L1314.7,708.5L1313.9,708.2ZM1315.0,703.8L1315.6,703.9L1315.5,705.3L1315.0,705.0ZM1326.2,724.3L1327.0,724.9L1326.7,725.8ZM1217.8,676.8L1219.2,677.0L1218.6,678.4ZM1138.9,596.3L1141.2,595.6L1140.1,597.4ZM1142.3,597.6L1143.5,597.0L1143.5,598.3ZM1146.3,597.4L1148.4,595.1L1148.2,596.9ZM1148.4,594.0L1149.6,593.3L1149.4,594.4ZM1137.8,580.2L1139.5,580.4L1138.9,580.9ZM1111.0,560.9L1113.2,561.1L1112.1,561.5ZM1117.5,640.3L1118.5,641.2L1117.7,641.5ZM777.5,487.3L781.3,487.8L780.9,492.0L782.8,496.7L780.6,495.1L778.5,491.5L776.9,488.9Z"/>
<path fill="#191a1a" d="M1292.7,378.7L1293.7,405.1L1296.2,407.4L1299.3,410.5L1299.9,415.1L1299.6,420.3L1301.5,424.0L1305.2,427.2L1309.2,427.5L1310.2,424.7L1307.7,423.2L1305.8,420.3L1306.8,418.5L1310.8,421.1L1315.2,422.9L1317.7,422.9L1317.0,418.9L1315.5,415.5L1320.1,412.1L1323.3,408.6L1327.3,409.8L1329.2,408.2L1328.6,402.7L1330.1,378.7ZM1326.1,408.2L1329.5,412.5L1329.2,408.2ZM1414.2,378.7L1415.2,404.3L1416.7,409.8L1420.5,407.4L1422.9,402.7L1422.0,378.7ZM1355.0,378.7L1358.2,394.5L1362.8,392.8L1370.6,391.1L1376.8,391.9L1380.0,378.7ZM1282.0,547.4L1279.3,545.7L1278.4,543.6L1277.2,542.0L1278.4,539.0L1280.6,537.7L1280.7,534.7L1282.1,532.1L1284.0,530.3L1285.0,527.6L1287.3,524.5L1289.9,523.8L1291.2,524.7L1290.2,525.8L1293.7,526.3L1296.2,526.3L1296.2,527.4L1292.7,529.6L1294.3,531.2L1295.9,532.9L1296.6,533.8L1298.3,533.4L1300.5,532.1L1302.1,530.7L1304.9,531.0L1305.8,530.3L1307.7,531.6L1309.2,532.7L1311.4,534.0L1313.3,535.3L1315.2,537.5L1317.0,539.2L1319.2,540.1L1321.1,542.8L1321.1,545.7L1319.2,546.8L1316.7,548.2L1313.9,548.0L1311.1,548.6L1307.7,547.8L1304.9,547.0L1302.1,545.5L1300.8,543.9L1297.4,544.3L1294.3,544.5L1291.2,545.7L1288.7,547.6L1285.6,547.6ZM1305.2,529.6L1301.8,529.6L1300.2,526.1L1302.1,524.7L1305.8,523.3L1308.6,521.7L1311.4,521.5L1313.9,521.5L1311.1,523.8L1309.6,524.9L1310.2,526.7L1308.3,529.0L1306.4,529.8ZM1275.0,550.3L1277.2,548.4L1279.7,548.0L1281.8,548.4L1284.6,549.3L1281.8,550.5L1278.7,550.9L1276.5,550.7ZM1339.8,528.1L1342.0,526.3L1344.8,524.5L1348.2,522.7L1351.3,521.7L1354.4,522.2L1356.9,523.6L1357.2,525.8L1356.0,529.0L1356.9,530.3L1355.3,529.6L1352.2,529.8L1350.4,531.6L1348.2,532.9L1350.1,534.7L1351.0,537.1L1353.2,539.8L1355.3,541.5L1355.0,545.3L1356.3,547.0L1358.5,544.1L1361.3,545.3L1361.0,547.8L1357.5,548.6L1356.3,549.9L1356.6,552.3L1357.8,554.3L1359.1,556.8L1359.4,560.7L1359.7,564.3L1357.5,564.9L1354.7,565.4L1351.3,565.6L1348.2,563.1L1345.4,562.3L1343.8,559.5L1343.8,556.8L1345.4,554.8L1345.7,551.5L1348.5,550.9L1346.0,549.5L1344.4,546.6L1342.3,544.1L1339.8,540.3L1339.5,536.8L1337.9,533.8L1337.3,531.6L1338.5,529.4ZM1285.3,453.4L1288.4,453.7L1292.4,451.9L1294.0,448.4L1293.0,445.2L1289.0,442.2L1285.9,443.9L1285.0,447.7ZM1298.3,445.5L1302.4,447.4L1304.9,445.2L1303.3,439.9L1300.8,435.9L1299.3,437.2L1300.2,440.6ZM1309.2,463.8L1311.7,465.2L1313.0,462.0L1310.8,459.9ZM1275.6,464.3L1277.5,465.5L1278.4,460.8L1277.5,459.6L1275.6,460.8ZM1230.1,462.6L1232.9,463.2L1235.1,459.9L1233.9,457.4L1231.7,459.0ZM1235.4,466.7L1236.7,465.5L1237.9,462.0L1236.7,462.3ZM1420.1,529.4L1422.6,531.2L1426.4,525.4L1430.1,524.7L1434.5,525.4L1438.2,524.0L1437.6,522.9L1432.9,523.6L1428.2,522.9L1424.5,523.1L1421.4,525.4ZM1428.6,542.8L1431.4,543.6L1435.4,542.8L1436.0,540.9L1432.3,541.1L1429.5,541.7ZM1450.7,518.5L1453.8,519.0L1456.6,517.6L1455.0,516.2L1451.9,516.9ZM1293.8,611.8L1294.5,613.8L1293.0,615.5L1291.2,616.9L1289.3,617.9L1289.6,616.9L1291.2,615.9L1292.4,614.5L1293.4,612.8ZM1290.2,691.6L1290.9,688.5L1293.7,687.6L1296.8,687.6L1298.0,689.4L1297.4,691.6L1295.9,694.7L1294.3,696.3L1291.8,696.3L1290.2,694.1ZM1282.8,699.1L1284.0,702.5L1283.7,706.6L1286.5,711.0L1288.4,715.4L1286.8,714.8L1284.0,709.7L1282.1,705.7L1282.1,701.6ZM1297.1,718.5L1299.0,721.4L1299.3,726.2L1300.8,731.3L1300.8,733.5L1299.3,733.2L1298.3,728.7L1297.7,723.6ZM1303.3,674.5L1304.3,675.1L1305.5,679.8L1304.3,680.7L1303.6,677.6ZM1286.2,685.1L1287.8,683.5L1289.3,681.6L1288.1,682.6L1286.8,683.8ZM1281.8,693.8L1282.8,694.1L1282.5,696.0L1281.5,695.7ZM1280.3,715.4L1282.1,715.7L1281.5,717.9L1280.0,717.3ZM1191.2,668.5L1192.4,667.9L1191.5,665.7L1192.4,663.8L1190.3,662.2L1188.4,660.7L1188.7,662.6L1190.6,664.4L1189.9,666.6ZM1235.1,648.0L1237.3,647.6L1237.0,646.0L1235.1,646.7ZM1307.1,651.8L1308.3,651.8L1308.3,650.2L1307.1,650.2ZM1275.6,744.5L1281.2,741.0L1281.5,741.9L1276.9,745.2ZM904.6,523.6L908.0,522.9L909.9,524.0L913.3,522.7L916.1,520.6L918.0,520.1L916.4,522.4L919.2,524.3L921.7,524.7L923.9,523.6L926.9,523.3L928.3,524.5L928.3,522.2L927.2,519.9L927.0,517.8L924.2,517.8L922.4,514.3L919.9,513.8L916.8,513.1L914.6,515.3L913.0,517.4L910.2,519.0L907.4,521.1ZM918.6,544.7L919.9,545.5L921.4,544.7L922.5,541.5L922.7,538.6L922.1,535.5L923.0,532.5L924.9,530.7L926.4,528.5L927.5,527.6L925.2,526.5L922.7,527.0L920.5,527.8L918.6,530.7L917.4,532.9L918.9,531.8L920.2,530.1L918.9,533.8L918.3,536.4L917.7,539.6L918.0,542.4ZM927.5,527.4L929.2,528.3L931.7,530.7L932.0,533.8L930.2,536.8L931.7,535.8L933.3,535.3L934.5,537.7L934.7,539.6L936.8,537.7L937.0,535.1L938.3,532.9L937.3,530.3L939.2,532.3L941.7,533.4L942.6,532.1L941.7,529.4L939.8,527.2L937.3,526.7L934.2,526.1L931.4,525.8L929.5,525.4L930.2,527.0ZM931.6,545.3L933.9,546.4L937.0,546.2L939.8,544.5L942.3,543.2L945.7,540.7L943.9,540.4L941.4,541.5L938.6,541.3L936.1,543.0L934.2,544.1L932.6,543.6ZM942.9,538.6L944.2,537.1L946.7,536.0L950.1,535.8L953.2,534.7L954.1,536.8L952.3,538.3L949.5,538.6L946.7,538.3L944.8,539.0ZM933.3,542.6L934.5,542.8L934.2,541.5ZM889.5,505.9L891.4,505.9L891.7,503.2L890.6,500.2L890.3,498.2L889.0,493.6L886.9,489.4L885.0,488.4L882.5,491.5L883.7,494.6L885.9,497.2L887.8,499.7L889.0,502.2L889.3,504.7ZM885.9,507.1L884.7,503.7L882.5,500.7L881.2,498.7L882.2,501.2L884.0,505.2ZM880.9,498.7L879.7,496.7L878.1,493.1L879.4,492.0L880.3,495.1ZM845.1,461.4L848.8,459.6L853.5,458.3L859.8,457.4L859.4,456.2L853.5,455.9L848.8,456.5L845.7,459.0ZM871.9,474.7L874.4,473.0L875.0,467.9L873.8,464.9L871.9,467.9L871.0,471.9ZM868.5,466.1L870.7,465.5L870.7,462.6L868.8,463.2ZM827.0,448.4L831.7,448.1L835.5,446.5L838.9,443.2L843.2,440.6L848.2,437.2L851.3,435.9L850.1,434.5L845.1,435.9L840.8,438.6L837.0,438.6L834.8,437.2L831.4,438.6L829.2,442.5L826.1,445.2ZM802.1,418.1L806.8,419.6L811.5,419.6L815.2,416.6L819.3,415.1L823.9,412.1L824.6,408.2L819.9,409.0L817.1,405.1L813.0,404.3L809.0,409.0L803.7,410.5L802.1,413.6ZM873.1,434.5L876.9,434.5L877.5,431.1L874.1,430.4ZM967.8,410.5L973.5,409.8L972.5,405.1L968.8,405.9ZM967.8,421.8L971.9,421.8L971.6,418.1L968.5,418.1ZM914.3,511.0L916.8,510.5L917.1,507.6L914.6,507.1ZM895.0,512.9L897.8,512.9L898.1,510.0L895.6,510.0ZM960.1,506.1L963.2,503.7L964.1,501.2L961.6,502.7ZM938.9,602.1L940.4,602.1L940.4,600.6L939.2,600.6ZM923.9,651.2L926.7,654.0L927.3,653.4L925.5,650.5ZM989.6,489.9L993.4,489.9L994.0,485.7L990.6,486.2ZM1003.7,490.5L1008.3,488.4L1009.9,486.8L1005.2,487.8ZM971.9,466.1L974.7,464.3L972.8,463.8ZM946.7,461.4L949.2,462.0L948.5,460.2ZM803.1,515.5L807.4,516.7L809.6,516.2L807.1,515.5ZM801.2,508.1L805.2,511.5L807.7,512.9L807.4,515.3L805.6,513.4L802.1,509.5ZM793.1,503.7L797.5,505.9L800.9,507.6L797.1,504.9ZM954.8,564.5L953.5,561.9L953.2,558.4L953.5,555.6L954.4,554.8L954.1,558.8L954.8,561.9ZM957.9,557.0L956.6,555.2L956.2,553.9L957.3,555.6ZM983.1,532.1L986.5,530.3L990.0,528.5L991.2,529.8L986.8,532.5L985.0,534.2ZM968.5,654.3L970.0,655.9L970.3,658.1L968.8,660.0L967.2,658.8L966.9,656.2ZM989.0,689.9L993.7,691.3L998.4,693.2L1001.5,695.7L1004.6,697.9L1004.6,698.8L1000.9,696.9L997.7,694.4L993.4,692.6L989.0,690.8Z"/>
<path fill="#343231" d="M933.0,527.2L936.4,527.0L937.0,528.5L934.2,528.3ZM913.6,518.1L916.1,516.9L915.8,517.4Z"/>
<path fill="none" stroke="#5b5957" stroke-width="0.7" stroke-linejoin="round" d="M807.4,512.9L895.1,512.9L895.1,511.0L896.8,514.3L901.8,514.8L906.5,517.1L912.4,517.6L916.1,516.2L927.0,522.7L928.3,524.7L929.5,525.8L931.1,527.6L934.5,529.8L935.8,537.3L934.7,539.8L934.5,541.5L932.6,542.8L932.6,544.1L934.8,545.3L938.6,543.2L945.4,540.7L945.3,538.8L944.8,537.9L948.5,537.1L952.3,537.1L953.8,534.7L956.9,531.8L958.8,531.2L968.8,531.2L971.0,529.4L972.5,527.2L973.5,523.6L975.9,520.1L978.7,520.6L980.3,521.7L980.3,528.1L981.5,529.8L982.8,531.6M752.3,378.7L752.3,451.5L757.9,452.8L763.2,460.2L766.3,456.5L771.0,455.9L775.6,462.6L780.3,471.3L786.5,477.0L786.2,481.4L784.7,484.1M826.7,581.3L834.2,580.6L833.9,581.3L845.7,585.7L854.5,585.7L854.5,583.9L859.8,584.1L864.4,588.1L866.3,591.9L870.0,594.0L871.6,591.5L875.6,591.2L879.1,596.5L881.6,599.3L882.8,603.2L888.7,604.7M904.3,642.7L904.3,640.9L905.9,637.8L909.6,637.8L906.8,633.9L908.0,633.9L908.0,632.1L913.8,632.1L913.6,638.3L914.6,638.3M913.8,632.1L916.4,629.8M916.8,639.0L913.6,641.5L913.2,643.2L910.8,645.2M913.2,643.2L915.8,644.6L918.0,646.4M919.6,647.6L921.4,645.1L924.5,644.8L927.0,641.9L932.3,641.2M924.5,653.7L927.7,654.0L930.8,654.7M933.3,663.3L933.3,660.0L934.4,658.6M948.8,665.9L950.7,663.8L950.6,661.4M969.4,651.3L966.3,653.7L964.1,658.1L966.0,662.2L967.2,666.6L973.1,666.6L975.3,669.5L981.2,669.1L980.3,674.5L981.9,677.9L980.0,679.8L982.2,682.3L983.1,684.8M983.1,684.8L982.5,683.2L974.1,683.2L974.1,685.1L975.9,686.6L973.5,686.8L973.3,689.1L975.3,691.9L973.6,701.6M973.6,701.6L971.3,700.3L973.3,696.9L964.4,696.0L961.9,692.6L956.9,688.8M956.9,688.8L953.8,687.3L950.1,686.5L946.0,684.1M956.9,688.8L956.0,693.2L952.6,696.6L947.9,699.1L946.3,702.8L943.9,704.1L941.4,702.2L941.4,699.1M973.6,701.6L964.4,704.4L961.3,711.3L964.4,717.0L966.6,719.8L971.6,719.2L971.6,723.0L974.7,722.8M974.7,722.8L977.5,727.8L976.6,731.3L975.5,735.1L976.6,739.7L974.7,743.2L975.0,743.9M974.7,722.8L977.2,723.0L984.0,719.5L988.1,719.2L988.1,725.2L995.3,728.1L999.0,731.0L1003.0,731.9L1004.0,740.0L1009.6,740.0L1009.9,743.2L1011.8,745.5M983.1,684.8L987.5,686.3L992.1,682.4L994.0,681.6L991.5,680.7L989.6,675.1L996.2,676.0L1002.4,672.3M1002.4,672.3L1000.2,669.9L1001.2,667.6L1003.7,666.3L1004.6,663.2L1005.1,662.4M1002.4,672.3L1004.9,672.9L1004.6,674.5L1005.5,677.6L1004.9,681.0L1007.7,684.4L1010.8,683.8L1015.5,682.4M1013.3,669.9L1013.0,672.9L1010.8,676.0L1013.3,679.8L1015.5,682.4M1015.5,682.4L1017.4,680.7L1021.4,681.3M1023.3,670.4L1022.0,672.9L1022.7,677.6L1021.4,681.3M1021.4,681.3L1026.4,681.6L1029.5,677.6L1030.6,675.4M1163.9,544.7L1166.1,543.9L1170.9,544.3L1172.2,545.9L1170.0,548.2L1170.0,551.5L1169.7,553.7L1168.1,553.9L1169.7,556.4L1168.8,558.8L1169.7,559.5L1168.1,562.1L1168.4,563.5M1185.9,538.3L1189.3,540.3L1193.7,540.9L1196.8,542.0L1201.3,542.2M1214.9,536.4L1213.3,534.2L1213.0,530.7L1213.3,527.2L1210.8,525.4L1210.5,524.0L1213.3,520.4L1215.2,519.4M1213.3,527.2L1218.0,525.8L1219.5,527.4L1221.1,524.9L1224.1,522.7M1215.2,519.4L1218.3,519.0L1221.4,519.9L1221.4,522.0L1224.1,522.7L1229.5,522.2L1230.1,523.6L1234.2,524.5L1233.9,527.6L1234.5,528.5M1215.2,519.4L1215.2,517.1L1217.0,512.9L1211.4,510.5L1209.6,510.3L1206.8,509.1L1204.6,508.1L1201.5,504.4L1199.4,502.7M1202.1,501.2L1204.9,501.2L1207.1,501.0L1209.7,502.5L1209.3,504.2L1210.2,504.4L1211.1,506.6L1210.5,507.6L1211.7,509.1L1211.4,510.5M1210.2,504.4L1210.5,501.7L1210.2,499.2L1212.7,498.4L1213.3,496.9L1213.5,494.9L1213.9,492.0M1218.4,483.0L1220.8,483.6M1235.7,488.4L1236.4,492.0L1235.4,493.8L1237.1,495.4L1237.4,500.2L1238.2,502.7L1237.8,503.7L1236.0,503.2L1232.0,505.9L1229.5,507.1L1230.4,509.5L1233.6,513.1L1234.6,514.1L1233.2,515.7L1231.4,516.9L1232.0,519.4L1229.5,519.2L1225.5,520.1L1223.3,520.8L1221.4,519.9M1237.8,503.7L1240.7,504.7L1242.3,505.4L1244.1,506.4L1246.6,507.1L1250.2,510.3L1252.2,511.0L1254.1,511.9L1256.9,511.0L1261.7,512.4M1234.6,514.1L1237.6,513.8L1238.2,512.9L1241.7,514.1L1244.3,514.8L1245.4,513.6L1248.2,511.5L1250.2,510.3M1244.3,514.8L1244.8,517.1L1247.3,518.8L1250.1,518.5L1252.6,516.7L1255.4,515.3L1259.1,515.7L1260.5,515.7L1261.7,512.4M1244.8,517.4L1244.1,519.0L1242.9,520.4L1241.7,522.9L1240.1,523.6L1237.0,524.9L1234.2,524.5M1241.7,522.9L1242.6,524.0L1244.1,525.4L1246.6,527.0L1250.1,527.2L1252.6,526.1L1254.6,526.1L1257.5,524.9L1258.8,522.2L1260.5,519.4L1262.8,517.8L1260.5,515.7M1233.9,529.0L1237.0,528.3L1239.2,529.2L1240.4,527.4L1240.2,525.8L1242.3,524.5M1240.6,532.1L1240.6,530.3L1244.1,530.1L1247.6,530.7L1250.7,531.7L1251.8,534.2L1252.2,537.3L1249.8,538.8L1249.0,541.7M1240.6,532.1L1242.0,534.7L1244.5,537.7L1246.5,539.8L1249.0,541.7M1250.1,527.2L1250.7,529.8L1250.7,531.7M1254.6,526.1L1256.9,529.8L1258.2,531.8L1261.3,532.9L1262.1,534.7L1261.3,539.0L1263.1,539.4L1261.3,542.8L1258.5,543.0L1255.7,544.7L1254.1,541.5L1253.0,541.5L1251.8,544.7M1255.7,544.7L1255.4,547.0L1256.8,548.8L1255.7,551.9L1253.8,553.5M1256.8,548.8L1259.4,548.4L1262.8,546.8L1267.8,545.9L1270.3,547.2L1273.4,545.3L1274.4,547.0L1272.6,549.3M1273.4,545.3L1276.5,543.6L1278.7,544.1M1261.3,542.8L1262.8,546.8M1262.1,534.7L1263.1,536.4L1270.9,537.1L1275.6,535.1L1280.4,536.6M1262.8,517.8L1269.1,518.8L1274.4,516.4L1277.2,519.9L1279.3,524.5L1279.3,529.2L1283.7,529.8M1274.4,516.4L1278.1,515.7L1282.1,517.8L1284.6,523.1L1284.8,524.9L1281.7,526.7L1279.3,529.2M1261.7,512.4L1262.2,510.0L1266.6,505.2L1265.0,500.7L1265.0,495.1L1265.9,488.1L1264.7,488.1L1262.5,486.0L1253.2,485.4M1262.5,486.0L1261.9,482.2L1257.5,481.1M1264.7,488.1L1267.5,488.4L1271.9,486.2L1271.2,482.7L1274.4,478.9L1269.4,475.9L1266.3,475.3L1260.0,474.7L1257.1,476.4M1274.4,478.9L1279.2,476.1L1278.1,469.6L1276.7,468.2L1274.0,468.2L1270.3,465.2L1267.4,466.4M1276.7,468.2L1277.2,463.8L1276.9,460.8L1278.7,456.8M1279.2,476.1L1285.6,477.8L1287.8,479.2L1288.1,484.1L1293.4,490.7L1289.3,492.0L1290.6,497.7L1286.8,501.7L1282.8,501.2L1277.2,500.5L1269.4,498.7L1265.0,500.7M1290.6,497.7L1296.8,496.4L1302.4,506.1L1309.9,508.6L1316.4,510.0L1315.5,517.6L1310.8,519.4L1310.5,521.7M1278.1,450.0L1283.4,443.9L1289.6,434.5L1285.0,426.8L1284.0,421.1L1285.3,414.4L1282.1,405.1L1285.0,398.6L1281.8,378.7M1266.7,413.6L1265.0,408.2L1265.9,400.2L1263.1,396.1L1255.4,387.6M1226.4,459.6L1228.3,454.7L1230.4,450.3L1229.5,443.9L1229.2,433.8L1235.1,423.2L1236.7,415.9L1239.8,408.2L1242.9,400.2L1247.6,391.9M1168.8,482.2L1166.9,484.6L1168.8,487.0L1171.9,487.6M1303.6,568.1L1305.7,567.0L1308.3,565.4L1313.0,565.4L1318.6,563.9L1323.4,563.5L1331.1,563.7L1329.2,558.8L1329.8,554.8L1331.1,553.5L1327.6,551.7L1327.0,547.8L1324.2,545.9L1320.9,546.2M1316.1,538.1L1323.9,539.0L1327.9,541.5L1333.2,542.0L1336.2,544.5L1338.8,547.0L1342.9,544.7M1327.0,547.8L1331.7,547.2L1336.7,547.8L1336.2,544.5M1331.7,547.2L1333.5,549.0L1334.8,551.5L1336.3,554.3L1336.3,556.8M1331.1,553.5L1334.8,556.8L1336.3,556.8L1341.0,553.5L1342.0,556.4L1343.8,558.6M1323.4,563.5L1319.8,566.2L1320.1,569.7L1319.2,574.2L1312.4,578.2L1306.1,582.1L1302.7,580.6M1303.5,573.3L1304.9,573.9L1305.5,575.0L1303.3,578.0L1302.4,578.6L1300.8,579.1M1302.7,580.6L1302.2,581.7L1302.1,585.0L1301.8,586.8L1300.5,592.1M1298.2,585.9L1300.2,592.2M1300.5,592.8L1304.0,593.3L1308.3,590.4L1309.9,588.6L1306.8,585.0L1313.0,582.6L1313.6,582.6L1312.4,578.2M1313.6,582.6L1317.3,583.5L1322.6,586.5L1330.7,593.3L1336.5,593.7L1340.1,595.6L1342.3,595.6M1336.5,593.7L1337.9,590.8L1340.1,590.1L1341.0,590.6M1331.1,563.7L1332.9,568.1L1335.1,569.3L1332.9,575.7L1335.1,579.5L1340.7,583.9L1340.1,586.8L1341.0,588.8L1342.7,590.6M1324.8,636.7L1326.1,633.4L1329.2,633.4L1336.0,633.9L1339.5,634.4L1341.6,630.8L1344.4,629.5L1353.5,628.2L1362.8,624.9L1364.8,618.2L1363.4,615.9L1355.3,615.0L1352.2,611.1M1363.4,615.9L1365.3,611.4L1365.9,608.7L1367.0,608.2M1353.5,628.2L1356.9,635.9M1349.7,608.9L1351.0,609.4M1359.4,562.9L1364.1,560.1L1369.7,559.3L1373.4,561.7L1376.2,562.3L1379.3,565.6L1382.0,565.6L1382.1,569.7L1380.1,574.6L1380.1,579.5L1381.0,585.0L1384.0,585.4L1381.0,591.0L1383.7,595.5L1387.1,596.9L1387.1,600.4L1388.7,602.3L1384.3,603.5L1383.4,607.3M1381.0,591.0L1386.2,592.6L1391.2,592.6L1398.0,591.0L1398.2,587.0L1402.7,585.4L1407.4,583.5L1408.0,579.5L1410.5,578.2L1409.2,575.7L1413.0,575.6L1414.5,571.2L1413.3,567.9L1417.6,564.9L1422.0,564.9L1424.8,563.3M1382.1,569.7L1385.6,570.8L1388.1,568.7L1392.4,567.0L1393.4,563.9L1398.6,562.9L1402.7,563.5L1403.3,564.3L1407.4,563.9L1410.2,561.9L1410.2,560.7L1413.6,559.2L1414.5,564.3L1415.2,565.4L1419.8,562.5L1424.8,563.3M1398.6,562.9L1398.8,560.3L1395.8,559.2L1391.5,556.6L1386.2,552.3L1384.3,547.8L1378.7,546.6L1378.4,543.2L1374.0,540.7L1370.3,543.2L1368.9,544.7L1369.4,547.0L1365.9,547.0L1365.9,531.2M1354.9,545.1L1360.3,542.8L1364.2,547.0L1365.9,547.0M1365.9,531.2L1374.0,528.5L1381.8,534.0L1384.6,537.7L1393.7,536.8L1397.4,539.8L1397.1,544.1L1399.0,547.4L1403.3,548.2L1405.2,549.9L1406.7,546.6L1410.2,544.1L1412.5,543.0L1413.3,540.7L1420.5,542.2L1420.8,539.8L1422.9,539.0L1427.3,540.7L1438.2,540.9L1441.5,543.2L1441.3,540.7L1443.2,539.0L1441.9,532.9L1440.7,531.2L1448.5,530.3L1447.9,528.7L1450.0,521.3L1457.8,522.0L1458.5,515.7L1461.9,512.4L1463.4,511.9L1456.9,510.0L1452.8,503.7L1451.3,503.2L1441.0,504.2L1434.2,491.5L1429.8,487.0L1420.1,490.5L1421.4,487.6L1413.3,487.0L1412.4,480.8L1406.4,480.6L1394.6,486.0L1382.1,488.1L1381.5,489.9L1384.9,493.1L1381.2,495.1L1383.1,501.2L1378.1,503.9L1373.7,502.9L1367.5,502.9L1365.0,505.2L1361.3,503.2L1355.0,500.7L1349.7,499.5L1343.2,505.2L1338.8,506.6L1337.3,511.2L1338.1,511.9L1336.3,515.7L1339.2,518.5L1341.6,519.0L1344.1,523.6L1342.9,524.3L1344.8,525.4M1402.7,563.5L1404.3,559.5L1402.4,556.4L1401.5,554.3L1404.9,554.1L1405.2,551.5L1407.4,549.0L1411.1,548.6L1414.8,546.2L1412.5,543.0M1407.4,552.7L1411.1,553.9L1415.8,555.0L1420.9,554.5L1421.4,558.0L1424.8,558.6L1424.8,563.3L1427.9,565.8L1430.7,569.5L1433.8,570.1L1437.3,574.2L1436.7,579.5L1439.1,580.6L1437.0,586.1L1443.8,589.7M1420.9,554.5L1422.0,551.9L1426.7,549.9L1431.0,548.2L1435.7,546.6L1441.5,543.2M1403.9,612.8L1405.5,610.4L1409.5,610.8L1412.7,610.1L1411.4,605.6L1409.9,602.5L1408.0,601.1L1410.8,597.6L1415.5,597.7L1418.6,594.0L1420.1,590.8L1423.9,586.5L1423.6,583.2L1426.1,582.1L1422.0,578.7L1422.9,572.7L1430.7,569.5M1443.8,589.7L1441.0,594.7L1451.0,599.9L1455.3,600.4L1458.8,602.5L1465.9,603.2L1466.1,597.9L1460.9,597.7L1458.5,596.5L1453.5,594.4L1447.2,589.4L1443.8,589.7M1465.9,603.2L1466.9,602.7L1468.7,603.5L1468.1,606.3L1465.9,608.4L1467.8,610.4L1468.0,614.2L1468.9,617.9L1469.0,618.9M1466.1,597.9L1468.4,600.0L1468.7,601.4L1481.2,601.8M1184.6,571.6L1186.2,573.9L1186.2,578.4L1187.8,581.7L1182.5,582.8L1180.3,584.5L1180.0,587.2L1175.9,590.4L1173.7,591.9L1169.4,591.9L1164.5,595.1L1164.5,600.0M1150.4,598.7L1164.5,598.7M1164.5,600.0L1164.5,604.6L1154.1,604.6L1154.1,613.3L1151.0,614.8L1150.7,620.4L1138.7,620.4M1164.5,600.0L1176.5,608.0L1195.2,621.2L1195.2,622.6L1201.5,625.5L1201.8,628.2L1204.7,627.7L1209.6,626.7L1214.9,622.1L1228.9,613.1L1221.1,603.2L1222.7,601.1L1222.0,596.5L1222.3,594.0L1221.1,589.7L1219.8,586.8L1219.5,582.8L1217.4,581.3L1214.9,576.5L1217.0,573.1L1217.4,568.1L1218.3,564.7M1176.5,608.0L1171.0,608.0L1174.4,639.6L1162.5,639.6L1158.2,639.9L1155.7,639.3L1153.5,642.0L1151.0,639.6L1147.0,636.0L1141.7,636.4L1140.1,637.8M1153.5,642.0L1156.0,649.6L1148.8,648.8L1144.2,648.6L1139.5,649.7M1156.0,649.6L1162.5,649.9L1165.6,654.0L1166.7,656.6L1172.2,655.0L1174.4,655.9L1175.3,651.5L1178.1,647.3L1181.8,645.7L1185.3,643.8L1189.3,640.9L1192.1,641.2L1195.5,640.3L1202.4,639.9L1204.7,636.0L1204.7,627.7M1139.5,645.7L1144.8,645.1L1148.5,646.5L1144.8,647.0L1139.5,647.3M1144.8,654.0L1148.8,651.8L1148.8,648.8M1150.1,660.2L1152.6,657.5L1156.6,657.2L1158.5,660.2L1159.4,661.9L1155.7,666.8M1159.4,661.9L1162.2,665.4L1165.0,664.8L1166.6,661.9L1166.7,656.6M1165.0,664.8L1165.6,668.8L1168.1,670.4L1168.0,674.8M1174.4,655.9L1176.9,658.1L1182.9,658.5L1183.1,663.5L1181.5,667.3L1182.5,672.6M1182.9,658.5L1182.6,654.0L1191.0,653.7L1192.9,657.2L1193.4,662.9L1193.4,667.3L1195.2,669.5M1191.0,653.7L1194.3,654.0L1195.9,658.8L1196.6,669.0M1194.3,654.0L1199.0,651.2L1200.4,649.6L1202.7,651.8L1203.3,655.6L1200.1,660.3L1199.9,668.5M1192.1,641.2L1194.6,646.4L1198.0,648.6L1199.0,651.2M1202.7,651.8L1204.3,646.0L1208.6,644.8L1213.3,647.6L1221.4,648.3L1229.8,647.3L1233.9,645.4L1235.4,647.3L1235.7,649.2L1233.9,654.0L1231.7,659.1L1229.5,662.2L1226.7,667.7L1222.0,667.3L1219.1,670.2L1218.3,673.5M1228.9,613.1L1235.7,616.2L1238.2,614.8L1266.3,626.5L1266.3,624.9L1269.4,624.9L1269.4,618.2L1269.4,593.3L1268.4,590.1L1269.8,584.5M1221.1,589.7L1223.6,587.2L1223.6,584.3L1227.3,581.7L1227.3,578.9M1269.4,618.2L1306.4,618.2M1238.2,614.8L1241.2,623.7L1239.8,635.1L1233.7,643.2L1233.9,645.4M1235.7,649.2L1238.4,652.4L1238.5,657.2L1235.0,658.3L1239.8,665.1L1246.6,663.7L1250.7,660.3L1256.9,658.5L1262.8,654.2L1260.0,648.6L1261.3,644.4L1262.8,639.3L1266.3,639.0L1266.3,626.5M1239.8,665.1L1237.0,669.1L1237.3,674.2L1242.0,681.6L1241.7,683.2L1236.7,681.8L1232.6,681.5L1226.7,681.6L1222.0,681.3M1222.0,685.4L1226.9,685.4L1226.9,681.6M1232.6,681.5L1236.4,684.1L1234.8,689.1L1236.7,690.4L1236.4,694.4L1232.0,696.0L1230.4,697.5L1227.6,695.8L1228.6,699.7L1226.2,700.8M1242.0,681.6L1243.2,677.6L1249.4,677.6L1249.4,675.1L1252.2,672.6L1261.3,675.7L1267.5,672.6L1277.0,672.7L1280.0,675.1L1283.4,674.2L1287.4,677.6L1291.2,677.3L1295.9,676.8L1297.4,675.2L1303.3,674.2L1306.4,674.6L1310.2,677.3L1314.5,677.7L1318.6,675.4L1322.0,676.2L1325.4,674.2L1331.7,673.1L1341.0,663.5L1337.9,663.5L1328.6,660.3L1324.8,654.2L1326.2,652.6M1249.4,677.6L1247.9,681.0L1247.3,685.4L1246.6,690.1L1242.0,695.4L1242.0,700.7L1238.2,702.2L1236.4,703.8L1232.3,702.8L1231.4,702.2L1229.5,706.4M1229.7,706.8L1232.3,706.8L1243.2,706.9L1246.3,713.8L1251.9,713.5L1252.2,710.4L1259.4,711.3L1259.7,718.5L1261.0,723.6L1266.3,722.7L1266.3,729.4L1260.0,729.4L1260.0,739.7L1264.4,744.2M1266.3,722.7L1270.3,723.6L1275.3,726.0L1277.5,727.1L1281.8,730.6L1284.3,730.8L1284.3,726.6L1280.0,725.8L1280.0,717.4L1281.5,715.1L1287.3,714.1L1294.0,717.9L1297.4,718.2L1300.4,724.7L1308.3,725.2L1317.5,721.4M1294.0,717.9L1295.1,722.7L1294.3,727.8L1293.4,731.3L1294.9,732.6L1285.6,735.6L1286.2,737.9L1281.5,739.0L1275.6,745.4L1270.2,744.9M1300.4,724.7L1303.3,735.5L1301.5,741.9L1298.7,739.8L1299.1,734.2L1294.9,732.6M1282.9,702.4L1285.0,702.2L1287.4,698.8L1286.5,696.0L1287.4,691.8L1297.1,691.6L1308.6,697.9L1309.1,699.6L1313.6,703.1M1287.4,691.8L1283.7,692.9L1283.7,690.1L1284.8,686.0L1289.0,681.8L1287.4,677.6M1282.8,696.9L1286.5,696.0M1297.1,691.6L1297.4,687.9L1299.0,685.1L1300.5,682.6L1298.8,677.0L1297.4,675.2M1322.0,676.2L1319.2,679.8L1319.2,691.1L1320.9,693.6M1323.6,649.4L1319.2,645.1L1316.1,643.0L1311.4,643.2L1309.6,641.5L1305.0,643.5L1306.4,637.2L1308.0,634.4L1311.7,631.5M1323.6,649.4L1321.7,654.0L1324.8,654.2M1305.0,643.5L1304.0,648.6L1300.8,651.5L1300.4,654.3L1298.3,655.4L1297.7,661.6L1294.3,663.8L1299.6,667.6L1301.5,671.7L1303.3,674.2M1297.7,658.8L1293.4,651.2L1290.9,656.2L1283.4,657.8L1278.7,659.2L1274.0,658.8L1268.8,661.0L1265.9,661.3L1262.8,654.2M1265.9,661.3L1270.0,664.8L1277.0,672.7"/>
<defs><filter id="halo" filterUnits="userSpaceOnUse" x="760" y="406" width="710" height="335"><feMorphology in="SourceAlpha" operator="dilate" radius="0.9" result="d"/><feFlood flood-color="#1b1b1b" flood-opacity="0.7"/><feComposite in2="d" operator="in" result="h"/><feMerge><feMergeNode in="h"/><feMergeNode in="SourceGraphic"/></feMerge></filter></defs>
<g font-size="10.8" text-anchor="middle" fill="#808080" stroke="#808080" stroke-width="0.36" filter="url(#halo)">
<text x="1133.6" y="420.2">Iceland</text>
<text x="1247.0" y="420.7">Sweden</text>
<text x="1219.9" y="445.8">Norway</text>
<text x="861.5" y="479.9">Canada</text>
<text x="1184.3" y="480.9">United</text>
<text x="1184.3" y="492.8">Kingdom</text>
<text x="1279.6" y="491.0">Belarus</text>
<text x="1290.2" y="511.6">Ukraine</text>
<text x="1200.8" y="518.8">France</text>
<text x="1401.6" y="517.6">Kazakhstan</text>
<text x="1231.0" y="543.2">Italy</text>
<text x="1178.7" y="547.7">Spain</text>
<text x="1266.0" y="558.7">Greece</text>
<text x="1377.5" y="556.7">Turkmenistan</text>
<text x="886.0" y="555.7">United States</text>
<text x="1222.0" y="576.3">Tunisia</text>
<text x="1173.2" y="582.8">Morocco</text>
<text x="1327.8" y="580.3">Iraq</text>
<text x="1361.5" y="581.3">Iran</text>
<text x="1403.6" y="597.9">Pakistan</text>
<text x="1248.0" y="601.9">Libya</text>
<text x="1285.2" y="604.0">Egypt</text>
<text x="872.0" y="612.5">Mexico</text>
<text x="944.3" y="619.5">Cuba</text>
<text x="1370.0" y="621.5">Oman</text>
<text x="1158.7" y="627.0">Mauritania</text>
<text x="1220.9" y="634.5">Niger</text>
<text x="1340.4" y="639.0">Yemen</text>
<text x="1315.3" y="662.7">Ethiopia</text>
<text x="1230.0" y="674.7">Cameroon</text>
<text x="963.4" y="679.7">Colombia</text>
<text x="1420.7" y="679.2">Maldives</text>
<text x="1310.3" y="688.8">Kenya</text>
<text x="1300.2" y="709.3">Tanzania</text>
<text x="957.4" y="721.8">Peru</text>
<text x="1031.2" y="719.4">Brazil</text>
<text x="991.0" y="743.0">Bolivia</text>
<text x="1248.5" y="729.2">Angola</text>
<text x="1445" y="611.4" text-anchor="start">Bangladesh</text>
</g>
<g font-size="17" font-style="italic" text-anchor="middle" fill="#6b6b6b" letter-spacing="4.6">
<text x="1080.5" y="532">North</text><text x="1080.4" y="555.6">Atlantic</text><text x="1080.8" y="579">Ocean</text>
</g>
<g font-size="11" fill="#e6e6e6" filter="url(#halo)">
<text x="946.8" y="533.6">Toronto</text>
<text x="963.9" y="560.2">New York</text>
<text x="1337.9" y="602.9" text-anchor="middle">Riyadh</text>
<text x="1240" y="695.8" text-anchor="middle">Kinshasa</text>
</g>
<circle cx="944.2" cy="536.2" r="1.9" fill="#f0f0f0"/><circle cx="960.3" cy="549.3" r="1.9" fill="#f0f0f0"/>
<circle cx="1337" cy="609.3" r="3.3" fill="#1d1d1d" stroke="#f0f0f0" stroke-width="1.1"/><circle cx="1337" cy="609.3" r="1.5" fill="#f0f0f0"/>
<circle cx="1239" cy="702.5" r="3.3" fill="#1d1d1d" stroke="#f0f0f0" stroke-width="1.1"/><circle cx="1239" cy="702.5" r="1.5" fill="#f0f0f0"/>
<defs><radialGradient id="hot"><stop offset="0" stop-color="#e84e00"/><stop offset="0.5" stop-color="#e84e00"/><stop offset="0.64" stop-color="#e84e00" stop-opacity="0.82"/><stop offset="0.78" stop-color="#e84e00" stop-opacity="0.42"/><stop offset="0.9" stop-color="#e84e00" stop-opacity="0.12"/><stop offset="1" stop-color="#e84e00" stop-opacity="0"/></radialGradient></defs>
<circle cx="1418.9" cy="621.3" r="43.5" fill="url(#hot)"/>
<text x="1418.9" y="624.2" font-size="13" font-weight="bold" text-anchor="middle" fill="#0e1b3d">11</text>
<circle cx="810" cy="518.9" r="18.2" fill="#94c600" stroke="#b9b4c4" stroke-opacity="0.55" stroke-width="0.8"/>
<text x="810.2" y="521.9" font-size="13" font-weight="bold" text-anchor="middle" fill="#0e1b3d">2</text>
<g><circle cx="777.6" cy="427.4" r="9.7" fill="#ececec" stroke="#1d1d1d" stroke-opacity="0.35" stroke-width="1"/><path d="M773.2 431.9 L773.78 425.6 A5.2 5.2 0 1 1 779.8 431.62 Z" fill="#2b2a29" stroke="#2b2a29" stroke-width="0.6" stroke-linejoin="round"/><path d="M778.8 424.2 L779.5 425.9 L781.2 426.6 L779.5 427.3 L778.8 429 L778.1 427.3 L776.4 426.6 L778.1 425.9Z" fill="#ececec"/><text x="790.3" y="432.2" font-size="15.5" font-weight="bold" fill="#ececec" stroke="#1d1d1d" stroke-opacity="0.35" stroke-width="1.6" paint-order="stroke" letter-spacing="0.55">mapbox</text></g>
<g><rect x="774" y="624" width="69" height="107" fill="#7d8f9f"/><text x="782.3" y="642.6" font-size="12" fill="#0c0c0c">frequency</text><rect x="782" y="651" width="16" height="24" fill="#94c600"/><rect x="782" y="675" width="16" height="24" fill="#ffcc22"/><rect x="782" y="699" width="16" height="24" fill="#e84d00"/><g font-size="12" fill="#4a6f90"><text x="806" y="666.6">&lt; 4</text><text x="806" y="690.7">4 - 6</text><text x="806" y="714.6">&gt;= 7</text></g></g>
<g><rect x="1200" y="721" width="270" height="20" fill="#ffffff" fill-opacity="0.5"/><text x="1205.2" y="735" font-size="12" fill="#333333">© Mapbox © OpenStreetMap <tspan font-weight="bold" dx="2">Improve this map</tspan></text></g>
</svg>
</div>
<div class="panel" id="p-table" style="left:6px;top:761px;width:1476px;height:422px">
  <div class="ptitle">Recent Alerts Summary</div>
  <div id="tbl">
    <div class="thead">
      <span class="c" style="left:37px">time</span>
      <span class="c" style="left:227px">action</span>
      <span class="c" style="left:478px">description</span>
      <span class="c" style="left:776px">severity</span>
      <span class="c" style="left:902px">source</span>
      <span class="c" style="left:1021px">city</span>
      <span class="c" style="left:1171px">state</span>
      <span class="c" style="left:1318px">country</span>
      <i class="sep" style="left:211px"></i>
      <i class="sep" style="left:462px"></i>
      <i class="sep" style="left:760px"></i>
      <i class="sep" style="left:886px"></i>
      <i class="sep" style="left:1004px"></i>
      <i class="sep" style="left:1155px"></i>
      <i class="sep" style="left:1302px"></i>
    </div>
    <div class="tr" style="top:22px;height:23px">
      <span class="ix">1</span>
      <span class="c" style="left:37px;width:170px">10-03-2023 19:16:20</span>
      <span class="c" style="left:227px;width:230px">IpAddressOutsideAllowedRanges</span>
      <span class="c" style="left:478px;width:280px">IpAddressOutsideAllowedRanges</span>
      <span class="c" style="left:776px;width:110px">low</span>
      <span class="c" style="left:902px;width:100px">Other</span>
      <span class="c" style="left:1021px;width:130px">ahmedabad</span>
      <span class="c" style="left:1171px;width:130px">gujarat</span>
      <span class="c" style="left:1318px;width:130px">india</span>
    </div>
    <div class="tr" style="top:45px;height:23px">
      <span class="ix">2</span>
      <span class="c" style="left:37px;width:170px">10-03-2023 19:16:20</span>
      <span class="c" style="left:227px;width:230px">BulkUsersExport</span>
      <span class="c" style="left:478px;width:280px">Occurs when bulk user export has been initiated</span>
      <span class="c" style="left:776px;width:110px">medium</span>
      <span class="c" style="left:902px;width:100px">Other</span>
    </div>
    <div class="tr" style="top:68px;height:23px">
      <span class="ix">3</span>
      <span class="c" style="left:37px;width:170px">10-03-2023 19:16:20</span>
      <span class="c" style="left:227px;width:230px">IpAddressOutsideAllowedRanges</span>
      <span class="c" style="left:478px;width:280px">IpAddressOutsideAllowedRanges</span>
      <span class="c" style="left:776px;width:110px">low</span>
      <span class="c" style="left:902px;width:100px">Other</span>
      <span class="c" style="left:1021px;width:130px">seattle</span>
      <span class="c" style="left:1171px;width:130px">washington</span>
      <span class="c" style="left:1318px;width:130px">united states</span>
    </div>
    <div class="tr" style="top:91px;height:37px">
      <span class="ix">4</span>
      <span class="c" style="left:37px;width:170px">10-03-2023 19:14:40</span>
      <span class="c" style="left:227px;width:230px">TooManyBulkSendsInitiated</span>
      <span class="c" style="left:478px;width:280px">Occurs when a user successfully initiates a bulk envelope send</span>
      <span class="c" style="left:776px;width:110px">high</span>
      <span class="c" style="left:902px;width:100px">Other</span>
    </div>
    <div class="tr" style="top:128px;height:23px">
      <span class="ix">5</span>
      <span class="c" style="left:37px;width:170px">10-03-2023 19:14:40</span>
      <span class="c" style="left:227px;width:230px">IpAddressOutsideAllowedRanges</span>
      <span class="c" style="left:478px;width:280px">IpAddressOutsideAllowedRanges</span>
      <span class="c" style="left:776px;width:110px">low</span>
      <span class="c" style="left:902px;width:100px">Other</span>
      <span class="c" style="left:1021px;width:130px">navi mumbai</span>
      <span class="c" style="left:1171px;width:130px">maharashtra</span>
      <span class="c" style="left:1318px;width:130px">india</span>
    </div>
    <div class="tr" style="top:151px;height:23px">
      <span class="ix">6</span>
      <span class="c" style="left:37px;width:170px">10-03-2023 19:14:40</span>
      <span class="c" style="left:227px;width:230px">BulkUsersExport</span>
      <span class="c" style="left:478px;width:280px">Occurs when bulk user export has been initiated</span>
      <span class="c" style="left:776px;width:110px">medium</span>
      <span class="c" style="left:902px;width:100px">Other</span>
    </div>
    <div class="tr" style="top:174px;height:23px">
      <span class="ix">7</span>
      <span class="c" style="left:37px;width:170px">10-03-2023 19:14:40</span>
      <span class="c" style="left:227px;width:230px">IpAddressOutsideAllowedRanges</span>
      <span class="c" style="left:478px;width:280px">IpAddressOutsideAllowedRanges</span>
      <span class="c" style="left:776px;width:110px">low</span>
      <span class="c" style="left:902px;width:100px">Other</span>
      <span class="c" style="left:1021px;width:130px">ahmedabad</span>
      <span class="c" style="left:1171px;width:130px">gujarat</span>
      <span class="c" style="left:1318px;width:130px">india</span>
    </div>
    <div class="tr" style="top:197px;height:23px">
      <span class="ix">8</span>
      <span class="c" style="left:37px;width:170px">10-03-2023 19:13:00</span>
      <span class="c" style="left:227px;width:230px">IpAddressOutsideAllowedRanges</span>
      <span class="c" style="left:478px;width:280px">IpAddressOutsideAllowedRanges</span>
      <span class="c" style="left:776px;width:110px">low</span>
      <span class="c" style="left:902px;width:100px">Other</span>
      <span class="c" style="left:1021px;width:130px">navi mumbai</span>
      <span class="c" style="left:1171px;width:130px">maharashtra</span>
      <span class="c" style="left:1318px;width:130px">india</span>
    </div>
    <div class="tr" style="top:220px;height:23px">
      <span class="ix">9</span>
      <span class="c" style="left:37px;width:170px">10-03-2023 19:13:00</span>
      <span class="c" style="left:227px;width:230px">IpAddressOutsideAllowedRanges</span>
      <span class="c" style="left:478px;width:280px">IpAddressOutsideAllowedRanges</span>
      <span class="c" style="left:776px;width:110px">low</span>
      <span class="c" style="left:902px;width:100px">Other</span>
      <span class="c" style="left:1021px;width:130px">ahmedabad</span>
      <span class="c" style="left:1171px;width:130px">gujarat</span>
      <span class="c" style="left:1318px;width:130px">india</span>
    </div>
    <div class="tr" style="top:243px;height:23px">
      <span class="ix">10</span>
      <span class="c" style="left:37px;width:170px">10-03-2023 19:13:00</span>
      <span class="c" style="left:227px;width:230px">BulkUsersExport</span>
      <span class="c" style="left:478px;width:280px">Occurs when bulk user export has been initiated</span>
      <span class="c" style="left:776px;width:110px">medium</span>
      <span class="c" style="left:902px;width:100px">Other</span>
    </div>
    <div class="tr" style="top:266px;height:1px"></div>
  </div>
  <div id="pager">
    <svg class="abs" style="left:47px;top:4px" width="10" height="14" viewBox="0 0 10 14"><path d="M8 2.4 L3 7.6 L8 12.8" fill="none" stroke="#5f7694" stroke-width="1.6"/></svg>
    <span class="pg on" style="left:68px">1</span>
    <span class="pg" style="left:96px">2</span>
    <span class="pg" style="left:124px">3</span>
    <span class="pg" style="left:152px">4</span>
    <svg class="abs" style="left:187px;top:4px" width="10" height="14" viewBox="0 0 10 14"><path d="M2.4 2.4 L7.4 7.6 L2.4 12.8" fill="none" stroke="#8198b5" stroke-width="1.6"/></svg>
  </div>
</div>
</body>
</html>
